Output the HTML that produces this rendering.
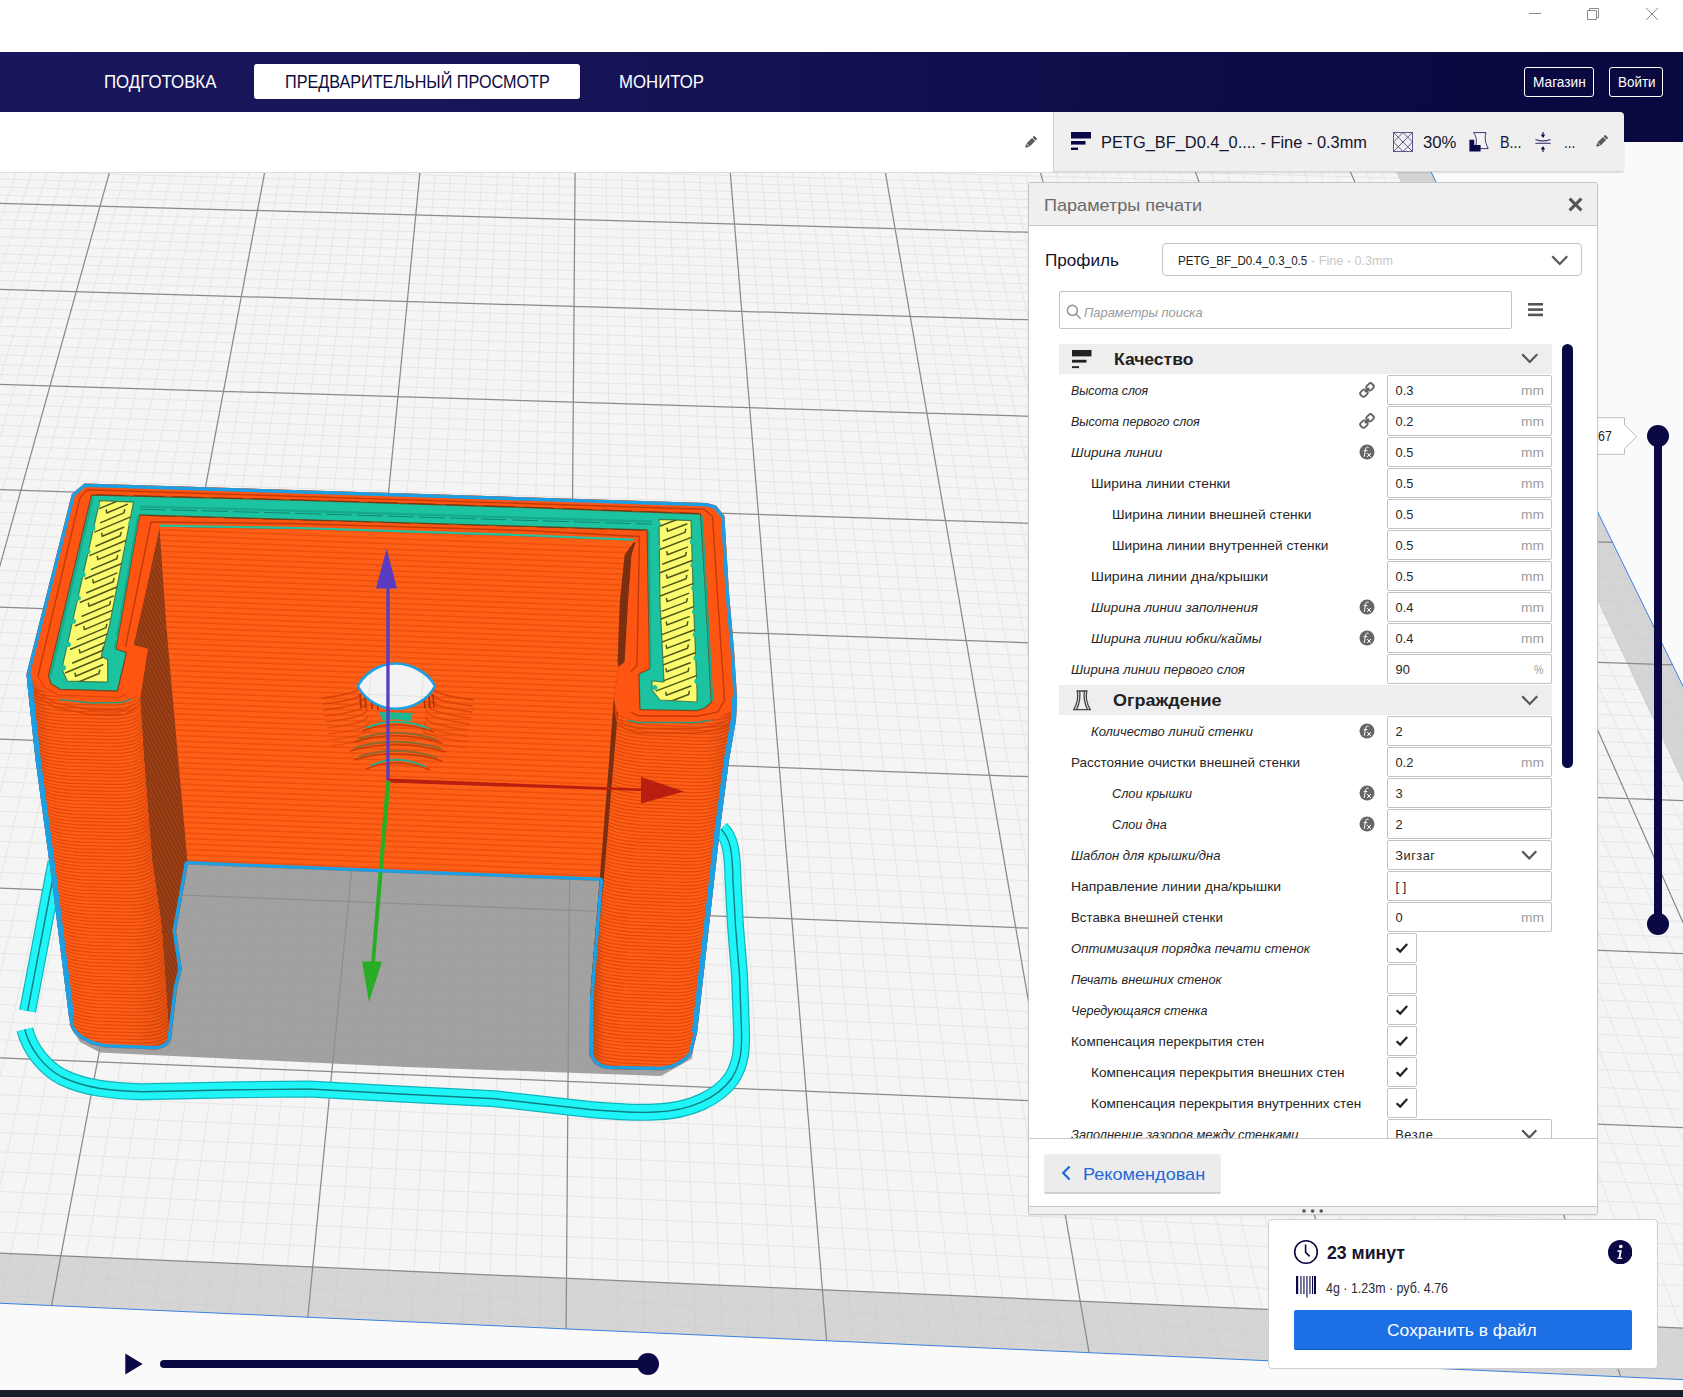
<!DOCTYPE html>
<html><head><meta charset="utf-8"><title>Cura</title>
<style>
html,body{margin:0;padding:0;background:#fafafa;}
body{width:1683px;height:1397px;position:relative;overflow:hidden;font-family:"Liberation Sans",sans-serif;}
.t{position:absolute;white-space:nowrap;line-height:1;transform-origin:0 0;}
div{box-sizing:border-box}
</style></head><body>
<svg style="position:absolute;left:0;top:0" width="1683" height="1397" viewBox="0 0 1683 1397"><rect width="1683" height="1397" fill="#fafafa"/><polygon points="-144.7,49.5 1390.6,89.3 2030.4,1395.4 -705.4,1271.2" fill="#f5f5f5"/>
<path d="M-130.4,49.9L-680.4,1272.4M-116.2,50.3L-655.5,1273.5M-101.9,50.6L-630.5,1274.6M-87.6,51.0L-605.5,1275.8M-73.4,51.4L-580.5,1276.9M-59.1,51.7L-555.4,1278.0M-44.8,52.1L-530.4,1279.2M-30.5,52.5L-505.3,1280.3M-16.2,52.9L-480.2,1281.5M12.5,53.6L-430.0,1283.7M26.8,54.0L-404.8,1284.9M41.1,54.3L-379.6,1286.0M55.5,54.7L-354.4,1287.2M69.8,55.1L-329.2,1288.3M84.1,55.4L-304.0,1289.5M98.5,55.8L-278.7,1290.6M112.9,56.2L-253.4,1291.7M127.2,56.6L-228.1,1292.9M156.0,57.3L-177.5,1295.2M170.4,57.7L-152.1,1296.3M184.8,58.1L-126.7,1297.5M199.2,58.4L-101.3,1298.6M213.6,58.8L-75.9,1299.8M228.0,59.2L-50.5,1301.0M242.4,59.5L-25.0,1302.1M256.9,59.9L0.4,1303.3M271.3,60.3L25.9,1304.4M300.2,61.0L77.0,1306.7M314.6,61.4L102.6,1307.9M329.1,61.8L128.1,1309.1M343.6,62.2L153.7,1310.2M358.0,62.5L179.4,1311.4M372.5,62.9L205.0,1312.5M387.0,63.3L230.7,1313.7M401.5,63.7L256.3,1314.9M416.0,64.0L282.0,1316.0M445.0,64.8L333.5,1318.4M459.5,65.2L359.3,1319.5M474.1,65.5L385.1,1320.7M488.6,65.9L410.9,1321.9M503.1,66.3L436.7,1323.1M517.7,66.7L462.5,1324.2M532.2,67.0L488.4,1325.4M546.8,67.4L514.3,1326.6M561.3,67.8L540.2,1327.8M590.5,68.6L592.1,1330.1M605.1,68.9L618.1,1331.3M619.7,69.3L644.1,1332.5M634.3,69.7L670.1,1333.6M648.9,70.1L696.1,1334.8M663.5,70.4L722.2,1336.0M678.1,70.8L748.2,1337.2M692.7,71.2L774.3,1338.4M707.4,71.6L800.4,1339.6M736.6,72.3L852.7,1341.9M751.3,72.7L878.9,1343.1M765.9,73.1L905.1,1344.3M780.6,73.5L931.4,1345.5M795.3,73.9L957.6,1346.7M810.0,74.2L983.9,1347.9M824.6,74.6L1010.1,1349.1M839.3,75.0L1036.5,1350.3M854.0,75.4L1062.8,1351.5M883.4,76.1L1115.5,1353.9M898.2,76.5L1141.9,1355.1M912.9,76.9L1168.3,1356.3M927.6,77.3L1194.7,1357.5M942.3,77.7L1221.2,1358.7M957.1,78.0L1247.7,1359.9M971.8,78.4L1274.2,1361.1M986.6,78.8L1300.7,1362.3M1001.4,79.2L1327.3,1363.5M1030.9,80.0L1380.4,1365.9M1045.7,80.3L1407.0,1367.1M1060.5,80.7L1433.6,1368.3M1075.3,81.1L1460.3,1369.5M1090.1,81.5L1487.0,1370.7M1104.9,81.9L1513.7,1371.9M1119.7,82.3L1540.4,1373.1M1134.5,82.6L1567.1,1374.3M1149.4,83.0L1593.9,1375.6M1179.0,83.8L1647.5,1378.0M1193.9,84.2L1674.3,1379.2M1208.7,84.6L1701.1,1380.4M1223.6,84.9L1728.0,1381.6M1238.5,85.3L1754.9,1382.9M1253.4,85.7L1781.8,1384.1M1268.2,86.1L1808.7,1385.3M1283.1,86.5L1835.7,1386.5M1298.0,86.9L1862.7,1387.8M1327.9,87.6L1916.7,1390.2M1342.8,88.0L1943.7,1391.4M1357.7,88.4L1970.8,1392.7M1372.6,88.8L1997.9,1393.9M1387.6,89.2L2025.0,1395.1M-147.8,56.3L1394.0,96.4M-151.0,63.2L1397.6,103.6M-154.1,70.1L1401.1,110.8M-157.3,77.0L1404.7,118.2M-160.6,84.1L1408.3,125.5M-163.8,91.2L1412.0,133.0M-167.1,98.3L1415.7,140.5M-170.4,105.5L1419.4,148.1M-173.7,112.8L1423.1,155.7M-180.5,127.6L1430.7,171.3M-183.9,135.0L1434.6,179.1M-187.4,142.6L1438.5,187.1M-190.9,150.2L1442.4,195.1M-194.4,157.9L1446.3,203.1M-198.0,165.6L1450.3,211.3M-201.6,173.4L1454.4,219.5M-205.2,181.3L1458.5,227.9M-208.8,189.3L1462.6,236.2M-216.2,205.4L1470.9,253.3M-220.0,213.6L1475.1,261.9M-223.8,221.9L1479.4,270.6M-227.6,230.2L1483.7,279.4M-231.5,238.6L1488.1,288.3M-235.4,247.1L1492.5,297.3M-239.3,255.7L1496.9,306.3M-243.3,264.4L1501.4,315.5M-247.3,273.1L1505.9,324.7M-255.5,290.9L1515.1,343.5M-259.6,299.9L1519.8,353.0M-263.8,309.0L1524.5,362.6M-268.0,318.2L1529.2,372.3M-272.2,327.4L1534.0,382.2M-276.5,336.8L1538.9,392.1M-280.9,346.3L1543.8,402.1M-285.3,355.8L1548.8,412.2M-289.7,365.5L1553.8,422.4M-298.7,385.1L1564.0,443.2M-303.3,395.1L1569.1,453.8M-307.9,405.1L1574.4,464.4M-312.6,415.3L1579.6,475.2M-317.3,425.5L1585.0,486.1M-322.0,435.9L1590.4,497.1M-326.8,446.4L1595.8,508.3M-331.7,457.0L1601.3,519.5M-336.6,467.7L1606.9,530.9M-346.6,489.5L1618.3,554.1M-351.7,500.5L1624.0,565.8M-356.8,511.7L1629.9,577.7M-362.0,523.0L1635.8,589.8M-367.3,534.5L1641.7,601.9M-372.6,546.0L1647.7,614.2M-377.9,557.7L1653.8,626.7M-383.3,569.5L1660.0,639.3M-388.8,581.5L1666.3,652.0M-400.0,605.8L1679.0,678.0M-405.7,618.2L1685.4,691.2M-411.4,630.7L1692.0,704.5M-417.2,643.3L1698.6,718.0M-423.1,656.1L1705.3,731.7M-429.0,669.1L1712.1,745.6M-435.0,682.2L1718.9,759.6M-441.1,695.4L1725.9,773.8M-447.3,708.9L1732.9,788.1M-459.8,736.2L1747.3,817.4M-466.2,750.1L1754.6,832.3M-472.7,764.2L1762.0,847.4M-479.2,778.4L1769.5,862.7M-485.8,792.9L1777.1,878.2M-492.5,807.5L1784.7,893.9M-499.3,822.3L1792.5,909.8M-506.2,837.3L1800.4,925.9M-513.2,852.4L1808.4,942.2M-527.4,883.4L1824.7,975.4M-534.6,899.1L1833.0,992.4M-541.9,915.1L1841.5,1009.6M-549.4,931.3L1850.0,1027.1M-556.9,947.7L1858.7,1044.8M-564.5,964.3L1867.4,1062.7M-572.3,981.2L1876.3,1080.8M-580.1,998.2L1885.4,1099.3M-588.0,1015.5L1894.5,1118.0M-604.2,1050.8L1913.2,1156.1M-612.5,1068.9L1922.8,1175.6M-620.9,1087.1L1932.5,1195.4M-629.4,1105.7L1942.3,1215.5M-638.0,1124.5L1952.3,1235.9M-646.8,1143.5L1962.4,1256.6M-655.7,1162.9L1972.7,1277.5M-664.7,1182.5L1983.1,1298.8M-673.8,1202.4L1993.7,1320.5M-692.5,1243.1L2015.4,1364.7M-702.0,1263.9L2026.5,1387.4" stroke="#e5e5e5" stroke-width="0.95" fill="none"/>
<polygon points="1356.9,88.4 1390.6,89.3 2030.4,1395.4 -705.4,1271.2 -683.1,1222.6 1944.6,1339.8" fill="#c1c1c1" fill-opacity="0.62"/>
<path d="M-144.7,49.5L-705.4,1271.2M-1.9,53.2L-455.1,1282.6M141.6,56.9L-202.8,1294.0M285.7,60.7L51.5,1305.6M430.5,64.4L307.8,1317.2M575.9,68.2L566.1,1328.9M722.0,72.0L826.6,1340.7M868.7,75.8L1089.1,1352.7M1016.1,79.6L1353.8,1364.7M1164.2,83.4L1620.7,1376.8M1312.9,87.3L1889.7,1389.0M-144.7,49.5L1390.6,89.3M-177.1,120.2L1426.9,163.5M-212.5,197.3L1466.7,244.7M-251.4,282.0L1510.5,334.1M-294.2,375.2L1558.8,432.8M-341.6,478.5L1612.6,542.4M-394.4,593.6L1672.6,664.9M-453.5,722.4L1740.1,802.7M-520.2,867.8L1816.5,958.7M-596.1,1033.1L1903.8,1136.9M-683.1,1222.6L2004.5,1342.4" stroke="#8a8a8a" stroke-width="1.25" fill="none"/>
<path d="M1390.6,89.3L2030.4,1395.4L-705.4,1271.2" stroke="#3b7fe2" stroke-width="1" fill="none"/><defs>
<pattern id="lay" width="40" height="5.4" patternUnits="userSpaceOnUse" patternTransform="rotate(2.2)"><rect width="40" height="5.4" fill="#ff6018"/><rect y="3.9" width="40" height="1.5" fill="#ec4e0c"/></pattern>
<pattern id="layp" width="40" height="5.2" patternUnits="userSpaceOnUse" patternTransform="rotate(2.5)"><rect width="40" height="5.2" fill="#ff5d16"/><rect y="3.4" width="40" height="1.8" fill="#dd440a"/></pattern>
<pattern id="layd" width="40" height="3.4" patternUnits="userSpaceOnUse" patternTransform="rotate(62)"><rect width="40" height="3.4" fill="#8d3713"/><rect y="2.2" width="40" height="1.2" fill="#a34417"/></pattern>
<linearGradient id="gl" x1="0" x2="1" y1="0" y2="0"><stop offset="0" stop-color="#000" stop-opacity=".14"/><stop offset=".16" stop-color="#000" stop-opacity="0"/><stop offset=".72" stop-color="#000" stop-opacity="0"/><stop offset="1" stop-color="#000" stop-opacity=".10"/></linearGradient>
<linearGradient id="gr" x1="0" x2="1" y1="0" y2="0"><stop offset="0" stop-color="#000" stop-opacity=".22"/><stop offset=".10" stop-color="#000" stop-opacity="0"/><stop offset=".8" stop-color="#000" stop-opacity="0"/><stop offset="1" stop-color="#000" stop-opacity=".12"/></linearGradient>
<clipPath id="silclip"><polygon points="84.3,483.4 400.0,493.3 706.6,503.0 716.0,505.5 724.4,516.0 729.0,593.0 734.0,650.0 737.0,697.7 736.0,720.0 729.0,760.0 719.7,831.0 709.0,926.0 697.0,1033.0 692.0,1053.7 687.0,1059.8 680.0,1064.5 672.0,1068.3 661.4,1070.3 610.0,1069.3 602.0,1068.0 594.5,1063.5 590.0,1056.0 590.0,997.7 599.6,881.0 400.0,873.3 187.8,864.6 176.0,931.0 181.8,969.0 177.0,988.0 171.0,1039.0 169.2,1043.5 165.0,1047.0 157.0,1049.5 104.6,1047.6 91.0,1044.0 81.0,1039.0 74.5,1033.5 71.0,1027.5 69.0,1016.7 51.0,874.0 35.6,760.0 28.0,690.0 26.5,674.0 71.8,494.2"/></clipPath>
<clipPath id="holeclip"><path d="M357.7 686 C368 668 385 663.5 396 663.5 C410 663.5 428 672 435 686 C428 700 412 708.8 396 708.8 C382 708.8 366 702 357.7 686Z"/></clipPath>
<clipPath id="plclip"><polygon points="60.0,660.0 26.5,674.0 28.0,690.0 35.6,760.0 51.0,874.0 69.0,1016.7 71.0,1027.5 74.5,1033.5 81.0,1039.0 91.0,1044.0 104.6,1047.6 157.0,1049.5 165.0,1047.0 169.2,1043.5 171.0,1039.0 168.7,1028.6 161.6,926.0 152.0,860.0 144.0,760.0 140.0,698.0 145.0,648.0 140.0,660.0"/></clipPath>
<clipPath id="prclip"><polygon points="640.0,680.0 618.7,666.8 613.9,697.7 609.2,760.0 599.6,881.0 590.0,997.7 589.5,1056.0 594.5,1063.5 602.0,1068.0 610.0,1069.3 661.4,1070.3 672.0,1068.3 680.0,1064.5 687.0,1059.8 692.0,1053.7 697.0,1033.0 709.0,926.0 719.7,831.0 729.0,760.0 736.0,720.0 737.0,697.7 720.0,680.0"/></clipPath>
<clipPath id="ycl"><polygon points="99.8,500.6 133.5,502.2 109.4,625.7 101.3,656.2 107.6,659.8 107.6,682.1 67.3,681.2 61.9,668.7"/></clipPath>
<clipPath id="ycr"><polygon points="659.0,519.4 691.0,520.6 693.5,602.0 697.0,690.0 697.0,702.0 660.0,700.0 652.0,690.0 652.0,681.0 664.0,682.0 660.0,602.0"/></clipPath>
<clipPath id="backclip"><polygon points="159.5,527.3 400.0,533.8 634.0,543.0 626.0,555.0 621.0,602.6 619.0,662.0 614.5,697.7 609.6,760.0 599.6,881.0 400.0,873.3 187.8,864.6 178.3,760.0 166.4,626.4"/></clipPath>
</defs>
<polygon points="187.8,864.6 400.0,873.3 599.6,881.0 640.0,950.0 693.0,1050.0 692.0,1058.4 661.0,1076.0 400.0,1066.8 100.0,1052.5 80.0,1042.0 69.0,1024.0 120.0,950.0" fill="#8f8f8f" fill-opacity="0.82"/>
<path d="M56 862 L27.6 1011" fill="none" stroke="#12b4bc" stroke-width="17" stroke-linecap="butt" stroke-linejoin="round"/>
<path d="M56 862 L27.6 1011" fill="none" stroke="#1ff4f6" stroke-width="14.6" stroke-linecap="butt" stroke-linejoin="round"/>
<path d="M56 862 L27.6 1011" fill="none" stroke="#0f7f86" stroke-width="1.4" stroke-linecap="butt"/>
<path d="M24.8 1029.5 C30 1050 45 1068 62 1077 C85 1088 110 1091 142.6 1091.7 L237.7 1089.8 L309 1089 L400 1094 L495 1098.8 L590 1109.5 C620 1112 640 1113 655 1112 C690 1111 718 1098 732 1078 C741 1063 742 1050 741.5 1030 L739.5 975 L735.5 926 L733 880 C732.5 850 730 838 721 829" fill="none" stroke="#12b4bc" stroke-width="17" stroke-linecap="butt" stroke-linejoin="round"/>
<path d="M24.8 1029.5 C30 1050 45 1068 62 1077 C85 1088 110 1091 142.6 1091.7 L237.7 1089.8 L309 1089 L400 1094 L495 1098.8 L590 1109.5 C620 1112 640 1113 655 1112 C690 1111 718 1098 732 1078 C741 1063 742 1050 741.5 1030 L739.5 975 L735.5 926 L733 880 C732.5 850 730 838 721 829" fill="none" stroke="#1ff4f6" stroke-width="14.6" stroke-linecap="butt" stroke-linejoin="round"/>
<path d="M24.8 1029.5 C30 1050 45 1068 62 1077 C85 1088 110 1091 142.6 1091.7 L237.7 1089.8 L309 1089 L400 1094 L495 1098.8 L590 1109.5 C620 1112 640 1113 655 1112 C690 1111 718 1098 732 1078 C741 1063 742 1050 741.5 1030 L739.5 975 L735.5 926 L733 880 C732.5 850 730 838 721 829" fill="none" stroke="#0f7f86" stroke-width="1.4" stroke-linecap="butt"/>
<polygon points="84.3,483.4 400.0,493.3 706.6,503.0 716.0,505.5 724.4,516.0 729.0,593.0 734.0,650.0 737.0,697.7 736.0,720.0 729.0,760.0 719.7,831.0 709.0,926.0 697.0,1033.0 692.0,1053.7 687.0,1059.8 680.0,1064.5 672.0,1068.3 661.4,1070.3 610.0,1069.3 602.0,1068.0 594.5,1063.5 590.0,1056.0 590.0,997.7 599.6,881.0 400.0,873.3 187.8,864.6 176.0,931.0 181.8,969.0 177.0,988.0 171.0,1039.0 169.2,1043.5 165.0,1047.0 157.0,1049.5 104.6,1047.6 91.0,1044.0 81.0,1039.0 74.5,1033.5 71.0,1027.5 69.0,1016.7 51.0,874.0 35.6,760.0 28.0,690.0 26.5,674.0 71.8,494.2" fill="#ff5f16" />
<polygon points="159.5,527.3 400.0,533.8 634.0,543.0 626.0,555.0 621.0,602.6 619.0,662.0 614.5,697.7 609.6,760.0 599.6,881.0 400.0,873.3 187.8,864.6 178.3,760.0 166.4,626.4" fill="url(#lay)" />
<g clip-path="url(#backclip)" fill="none">
<path d="M322.0 698.0Q367.4 693.0 362.0 682.0" stroke="#d23f08" stroke-width="1.6" stroke-opacity="0.85"/>
<path d="M474.0 700.0Q424.6 694.0 432.0 683.0" stroke="#d23f08" stroke-width="1.6" stroke-opacity="0.85"/>
<path d="M323.0 704.0Q367.9 699.0 363.2 688.6" stroke="#d23f08" stroke-width="1.6" stroke-opacity="0.80"/>
<path d="M473.0 706.0Q424.1 700.0 430.8 689.6" stroke="#d23f08" stroke-width="1.6" stroke-opacity="0.80"/>
<path d="M324.0 710.0Q368.5 705.0 364.4 695.2" stroke="#d23f08" stroke-width="1.6" stroke-opacity="0.75"/>
<path d="M472.0 712.0Q423.5 706.0 429.6 696.2" stroke="#d23f08" stroke-width="1.6" stroke-opacity="0.75"/>
<path d="M325.0 716.0Q369.1 711.0 365.6 701.8" stroke="#d23f08" stroke-width="1.6" stroke-opacity="0.70"/>
<path d="M471.0 718.0Q422.9 712.0 428.4 702.8" stroke="#d23f08" stroke-width="1.6" stroke-opacity="0.70"/>
<path d="M326.0 722.0Q369.6 717.0 366.8 708.4" stroke="#d23f08" stroke-width="1.6" stroke-opacity="0.65"/>
<path d="M470.0 724.0Q422.4 718.0 427.2 709.4" stroke="#d23f08" stroke-width="1.6" stroke-opacity="0.65"/>
<path d="M327.0 728.0Q370.1 723.0 368.0 715.0" stroke="#d23f08" stroke-width="1.6" stroke-opacity="0.60"/>
<path d="M469.0 730.0Q421.9 724.0 426.0 716.0" stroke="#d23f08" stroke-width="1.6" stroke-opacity="0.60"/>
<path d="M328.0 734.0Q370.7 729.0 369.2 721.6" stroke="#d23f08" stroke-width="1.6" stroke-opacity="0.55"/>
<path d="M468.0 736.0Q421.3 730.0 424.8 722.6" stroke="#d23f08" stroke-width="1.6" stroke-opacity="0.55"/>
<path d="M329.0 740.0Q371.2 735.0 370.4 728.2" stroke="#d23f08" stroke-width="1.6" stroke-opacity="0.50"/>
<path d="M467.0 742.0Q420.8 736.0 423.6 729.2" stroke="#d23f08" stroke-width="1.6" stroke-opacity="0.50"/>
<path d="M330.0 746.0Q371.8 741.0 371.6 734.8" stroke="#d23f08" stroke-width="1.6" stroke-opacity="0.45"/>
<path d="M466.0 748.0Q420.2 742.0 422.4 735.8" stroke="#d23f08" stroke-width="1.6" stroke-opacity="0.45"/>
<path d="M366 728Q396 715 430 729" stroke="#1fb694" stroke-width="1.8"/>
<path d="M362 731Q396 718 434 732" stroke="#c63b07" stroke-width="1.5"/>
<path d="M358 739Q396 726 438 740" stroke="#8a6a30" stroke-width="1.8"/>
<path d="M354 742Q396 729 442 743" stroke="#c63b07" stroke-width="1.5"/>
<path d="M354 748Q396 735 442 749" stroke="#8a6a30" stroke-width="1.8"/>
<path d="M350 751Q396 738 446 752" stroke="#c63b07" stroke-width="1.5"/>
<path d="M358 757Q396 744 438 758" stroke="#8a6a30" stroke-width="1.8"/>
<path d="M354 760Q396 747 442 761" stroke="#c63b07" stroke-width="1.5"/>
<path d="M370 766Q396 753 426 767" stroke="#2aa888" stroke-width="1.8"/>
<path d="M366 769Q396 756 430 770" stroke="#c63b07" stroke-width="1.5"/>
<path d="M379 712L413 713L410 722Q396 717 383 721Z" fill="#1fb694"/>
<path d="M360 694.2L361 707.7" stroke="#a83205" stroke-width="1.6"/>
<path d="M365 694.5L366 708.3" stroke="#a83205" stroke-width="1.6"/>
<path d="M371 694.8L372 709.0" stroke="#a83205" stroke-width="1.6"/>
<path d="M377 695.0L378 709.7" stroke="#a83205" stroke-width="1.6"/>
<path d="M424 694.6L425 708.6" stroke="#a83205" stroke-width="1.6"/>
<path d="M429 694.4L430 708.0" stroke="#a83205" stroke-width="1.6"/>
<path d="M433 694.1L434 707.6" stroke="#a83205" stroke-width="1.6"/>
</g>
<polygon points="159.5,527.3 166.4,626.4 178.3,760.0 187.8,864.6 176.0,931.0 181.8,969.0 177.0,988.0 171.0,1039.0 168.7,1028.6 161.6,926.0 152.0,860.0 144.0,760.0 140.0,698.0 147.8,649.0 133.5,645.0 146.0,590.0" fill="url(#layd)" />
<polygon points="60.0,660.0 26.5,674.0 28.0,690.0 35.6,760.0 51.0,874.0 69.0,1016.7 71.0,1027.5 74.5,1033.5 81.0,1039.0 91.0,1044.0 104.6,1047.6 157.0,1049.5 165.0,1047.0 169.2,1043.5 171.0,1039.0 168.7,1028.6 161.6,926.0 152.0,860.0 144.0,760.0 140.0,698.0 145.0,648.0 140.0,660.0" fill="#ff5e16" />
<path d="M27.0 682.0C30.5 689.5 41.5 692.2 61.8 693.6L102.4 694.8C125.0 695.6 136.8 692.9 141.8 684.4M27.4 685.5C30.9 693.0 41.8 695.7 62.0 697.1L102.3 698.3C124.8 699.0 136.5 696.3 141.5 687.8M27.7 688.9C31.2 696.4 42.1 699.1 62.2 700.5L102.2 701.7C124.5 702.4 136.1 699.7 141.1 691.2M28.1 692.4C31.6 699.9 42.4 702.6 62.4 703.9L102.4 705.1C124.6 705.9 136.2 703.2 141.2 694.7M28.5 695.8C32.0 703.3 42.8 706.0 62.8 707.4L102.7 708.6C124.9 709.3 136.4 706.6 141.4 698.1M28.9 699.3C32.4 706.8 43.2 709.5 63.1 710.8L103.0 712.0C125.1 712.8 136.6 710.1 141.6 701.6M29.2 702.7C32.7 710.2 43.5 712.9 63.4 714.3L103.2 715.5C125.3 716.2 136.8 713.5 141.8 705.0M29.6 706.2C33.1 713.7 43.9 716.4 63.7 717.7L103.5 718.9C125.6 719.7 137.0 717.0 142.0 708.5M30.0 709.6C33.5 717.1 44.2 719.8 64.1 721.2L103.8 722.4C125.8 723.1 137.3 720.4 142.3 711.9M30.4 713.1C33.9 720.6 44.6 723.3 64.4 724.6L104.0 725.8C126.1 726.6 137.5 723.9 142.5 715.4M30.7 716.5C34.2 724.0 44.9 726.7 64.7 728.1L104.3 729.3C126.3 730.0 137.7 727.3 142.7 718.8M31.1 720.0C34.6 727.5 45.3 730.2 65.1 731.5L104.6 732.7C126.6 733.4 137.9 730.7 142.9 722.2M31.5 723.4C35.0 730.9 45.7 733.6 65.4 735.0L104.9 736.2C126.8 736.9 138.2 734.2 143.2 725.7M31.9 726.9C35.4 734.4 46.0 737.1 65.7 738.4L105.1 739.6C127.0 740.3 138.4 737.6 143.4 729.1M32.2 730.3C35.7 737.8 46.4 740.5 66.1 741.9L105.4 743.1C127.3 743.8 138.6 741.1 143.6 732.6M32.6 733.8C36.1 741.3 46.7 744.0 66.4 745.3L105.7 746.5C127.5 747.2 138.8 744.5 143.8 736.0M33.0 737.2C36.5 744.7 47.1 747.4 66.7 748.8L106.0 750.0C127.8 750.7 139.0 748.0 144.0 739.5M33.4 740.7C36.9 748.2 47.4 750.9 67.0 752.2L106.2 753.4C128.0 754.1 139.3 751.4 144.3 742.9M33.7 744.1C37.2 751.6 47.8 754.3 67.4 755.7L106.5 756.9C128.3 757.6 139.5 754.9 144.5 746.4M34.1 747.6C37.6 755.1 48.1 757.8 67.7 759.1L106.8 760.3C128.5 761.0 139.7 758.3 144.7 749.8M34.5 751.0C38.0 758.5 48.5 761.2 68.0 762.6L107.1 763.7C128.8 764.5 139.9 761.8 144.9 753.3M34.9 754.5C38.4 762.0 48.9 764.7 68.4 766.0L107.4 767.2C129.0 767.9 140.2 765.2 145.2 756.7M35.4 757.9C38.9 765.4 49.4 768.1 68.8 769.5L107.7 770.6C129.3 771.3 140.5 768.6 145.5 760.1M35.9 761.4C39.4 768.9 49.8 771.6 69.2 772.9L108.1 774.1C129.6 774.8 140.7 772.1 145.7 763.6M36.3 764.8C39.8 772.3 50.3 775.0 69.6 776.4L108.4 777.5C129.9 778.2 141.0 775.5 146.0 767.0M36.8 768.3C40.3 775.8 50.7 778.5 70.0 779.8L108.7 781.0C130.2 781.7 141.3 779.0 146.3 770.5M37.3 771.7C40.8 779.2 51.1 781.9 70.5 783.3L109.1 784.4C130.6 785.1 141.6 782.4 146.6 773.9M37.7 775.2C41.2 782.7 51.6 785.4 70.9 786.7L109.4 787.9C130.9 788.6 141.9 785.9 146.9 777.4M38.2 778.6C41.7 786.1 52.0 788.8 71.3 790.2L109.8 791.3C131.2 792.0 142.1 789.3 147.1 780.8M38.7 782.1C42.2 789.6 52.5 792.3 71.7 793.6L110.1 794.8C131.5 795.5 142.4 792.8 147.4 784.3M39.1 785.5C42.6 793.0 52.9 795.7 72.1 797.1L110.5 798.2C131.8 798.9 142.7 796.2 147.7 787.7M39.6 789.0C43.1 796.5 53.4 799.2 72.5 800.5L110.8 801.7C132.1 802.3 143.0 799.6 148.0 791.1M40.1 792.4C43.6 799.9 53.8 802.6 72.9 804.0L111.1 805.1C132.4 805.8 143.2 803.1 148.2 794.6M40.5 795.9C44.0 803.4 54.2 806.1 73.3 807.4L111.5 808.5C132.7 809.2 143.5 806.5 148.5 798.0M41.0 799.3C44.5 806.8 54.7 809.5 73.7 810.9L111.8 812.0C133.0 812.7 143.8 810.0 148.8 801.5M41.5 802.8C45.0 810.3 55.1 813.0 74.1 814.3L112.2 815.4C133.3 816.1 144.1 813.4 149.1 804.9M41.9 806.2C45.4 813.7 55.6 816.4 74.5 817.7L112.5 818.9C133.6 819.6 144.3 816.9 149.3 808.4M42.4 809.7C45.9 817.2 56.0 819.9 75.0 821.2L112.8 822.3C133.9 823.0 144.6 820.3 149.6 811.8M42.9 813.1C46.4 820.6 56.5 823.3 75.4 824.6L113.2 825.8C134.2 826.5 144.9 823.8 149.9 815.3M43.3 816.6C46.8 824.1 56.9 826.8 75.8 828.1L113.5 829.2C134.5 829.9 145.2 827.2 150.2 818.7M43.8 820.0C47.3 827.5 57.3 830.2 76.2 831.5L113.9 832.7C134.8 833.3 145.4 830.6 150.4 822.1M44.3 823.5C47.8 831.0 57.8 833.7 76.6 835.0L114.2 836.1C135.1 836.8 145.7 834.1 150.7 825.6M44.7 826.9C48.2 834.4 58.2 837.1 77.0 838.4L114.5 839.6C135.4 840.2 146.0 837.5 151.0 829.0M45.2 830.4C48.7 837.9 58.7 840.6 77.4 841.9L114.9 843.0C135.7 843.7 146.3 841.0 151.3 832.5M45.7 833.8C49.2 841.3 59.1 844.0 77.8 845.3L115.2 846.5C136.0 847.1 146.5 844.4 151.5 835.9M46.1 837.3C49.6 844.8 59.6 847.5 78.2 848.8L115.6 849.9C136.3 850.6 146.8 847.9 151.8 839.4M46.6 840.7C50.1 848.2 60.0 850.9 78.6 852.2L115.9 853.3C136.6 854.0 147.1 851.3 152.1 842.8M47.0 844.2C50.5 851.7 60.4 854.4 79.0 855.7L116.2 856.8C136.9 857.4 147.4 854.7 152.4 846.2M47.5 847.6C51.0 855.1 60.9 857.8 79.5 859.1L116.6 860.2C137.2 860.9 147.6 858.2 152.6 849.7M48.0 851.1C51.5 858.6 61.3 861.3 79.9 862.6L116.9 863.7C137.5 864.3 147.9 861.6 152.9 853.1M48.4 854.5C51.9 862.0 61.8 864.7 80.3 866.0L117.4 867.1C138.0 867.8 148.4 865.1 153.4 856.6M48.9 858.0C52.4 865.5 62.3 868.2 80.8 869.5L117.9 870.6C138.5 871.2 148.9 868.5 153.9 860.0M49.4 861.4C52.9 868.9 62.7 871.6 81.3 872.9L118.4 874.0C138.9 874.7 149.4 872.0 154.4 863.5M49.8 864.9C53.3 872.4 63.2 875.1 81.8 876.4L118.8 877.5C139.4 878.1 149.9 875.4 154.9 866.9M50.3 868.3C53.8 875.8 63.7 878.5 82.2 879.8L119.3 880.9C139.9 881.6 150.4 878.9 155.4 870.4M50.7 871.8C54.2 879.3 64.1 882.0 82.7 883.3L119.8 884.4C140.4 885.0 150.9 882.3 155.9 873.8M51.2 875.2C54.7 882.7 64.5 885.4 83.1 886.7L120.3 887.8C140.9 888.5 151.4 885.8 156.4 877.3M51.6 878.7C55.1 886.2 65.0 888.9 83.6 890.2L120.8 891.3C141.4 891.9 151.9 889.2 156.9 880.7M52.0 882.1C55.5 889.6 65.4 892.3 84.0 893.6L121.2 894.7C141.9 895.4 152.4 892.7 157.4 884.2M52.5 885.6C56.0 893.1 65.9 895.8 84.5 897.1L121.7 898.2C142.4 898.9 152.9 896.2 157.9 887.7M52.9 889.0C56.4 896.5 66.3 899.2 84.9 900.5L122.2 901.6C142.9 902.3 153.4 899.6 158.4 891.1M53.3 892.5C56.8 900.0 66.8 902.7 85.4 904.0L122.7 905.1C143.4 905.8 153.9 903.1 158.9 894.6M53.8 895.9C57.3 903.4 67.2 906.1 85.9 907.4L123.2 908.6C143.9 909.2 154.4 906.5 159.4 898.0M54.2 899.4C57.7 906.9 67.6 909.6 86.3 910.9L123.6 912.0C144.4 912.7 154.9 910.0 159.9 901.5M54.6 902.8C58.1 910.3 68.1 913.0 86.8 914.3L124.1 915.5C144.9 916.1 155.4 913.4 160.4 904.9M55.1 906.3C58.6 913.8 68.5 916.5 87.2 917.8L124.6 918.9C145.4 919.6 155.9 916.9 160.9 908.4M55.5 909.7C59.0 917.2 69.0 919.9 87.7 921.2L125.1 922.4C145.8 923.0 156.4 920.3 161.4 911.8M55.9 913.2C59.4 920.7 69.4 923.4 88.1 924.7L125.6 925.8C146.3 926.5 156.9 923.8 161.9 915.3M56.4 916.6C59.9 924.1 69.9 926.8 88.6 928.1L126.0 929.3C146.8 929.9 157.4 927.2 162.4 918.7M56.8 920.1C60.3 927.6 70.3 930.3 89.0 931.6L126.4 932.7C147.2 933.4 157.7 930.7 162.7 922.2M57.3 923.5C60.8 931.0 70.7 933.7 89.4 935.0L126.7 936.2C147.5 936.8 158.0 934.1 163.0 925.6M57.7 927.0C61.2 934.5 71.1 937.2 89.7 938.5L127.0 939.6C147.7 940.3 158.2 937.6 163.2 929.1M58.1 930.4C61.6 937.9 71.5 940.6 90.1 941.9L127.3 943.0C148.0 943.7 158.5 941.0 163.5 932.5M58.6 933.9C62.1 941.4 71.9 944.1 90.5 945.4L127.6 946.5C148.3 947.1 158.7 944.4 163.7 935.9M59.0 937.3C62.5 944.8 72.3 947.5 90.9 948.8L127.9 949.9C148.5 950.6 158.9 947.9 163.9 939.4M59.4 940.8C62.9 948.3 72.8 951.0 91.3 952.3L128.2 953.4C148.8 954.0 159.2 951.3 164.2 942.8M59.9 944.2C63.4 951.7 73.2 954.4 91.6 955.7L128.5 956.8C149.1 957.5 159.4 954.8 164.4 946.3M60.3 947.7C63.8 955.2 73.6 957.9 92.0 959.2L128.9 960.3C149.3 960.9 159.7 958.2 164.7 949.7M60.7 951.1C64.2 958.6 74.0 961.3 92.4 962.6L129.2 963.7C149.6 964.4 159.9 961.7 164.9 953.2M61.2 954.6C64.7 962.1 74.4 964.8 92.8 966.1L129.5 967.2C149.9 967.8 160.1 965.1 165.1 956.6M61.6 958.0C65.1 965.5 74.8 968.2 93.1 969.5L129.8 970.6C150.1 971.3 160.4 968.6 165.4 960.1M62.0 961.5C65.5 969.0 75.2 971.7 93.5 973.0L130.1 974.1C150.4 974.7 160.6 972.0 165.6 963.5M62.5 964.9C66.0 972.4 75.6 975.1 93.9 976.4L130.4 977.5C150.7 978.1 160.8 975.4 165.8 966.9M62.9 968.4C66.4 975.9 76.1 978.6 94.3 979.9L130.7 981.0C150.9 981.6 161.1 978.9 166.1 970.4M63.3 971.8C66.8 979.3 76.5 982.0 94.6 983.3L131.0 984.4C151.2 985.0 161.3 982.3 166.3 973.8M63.8 975.3C67.3 982.8 76.9 985.5 95.0 986.8L131.3 987.8C151.5 988.5 161.6 985.8 166.6 977.3M64.2 978.7C67.7 986.2 77.3 988.9 95.4 990.2L131.6 991.3C151.7 991.9 161.8 989.2 166.8 980.7M64.7 982.2C68.2 989.7 77.7 992.4 95.8 993.7L131.9 994.7C152.0 995.4 162.0 992.7 167.0 984.2M65.1 985.6C68.6 993.1 78.1 995.8 96.1 997.1L132.2 998.2C152.3 998.8 162.3 996.1 167.3 987.6M65.5 989.1C69.0 996.6 78.5 999.3 96.5 1000.5L132.5 1001.6C152.5 1002.2 162.5 999.5 167.5 991.0M66.0 992.5C69.5 1000.0 78.9 1002.7 96.9 1004.0L132.8 1005.1C152.8 1005.7 162.8 1003.0 167.8 994.5M66.4 996.0C69.9 1003.5 79.3 1006.2 97.3 1007.4L133.1 1008.5C153.0 1009.1 163.0 1006.4 168.0 997.9M66.8 999.4C70.3 1006.9 79.8 1009.6 97.6 1010.9L133.4 1012.0C153.3 1012.6 163.2 1009.9 168.2 1001.4M67.3 1002.9C70.8 1010.4 80.2 1013.1 98.0 1014.3L133.7 1015.4C153.6 1016.0 163.5 1013.3 168.5 1004.8M67.7 1006.3C71.2 1013.8 80.6 1016.5 98.4 1017.8L134.0 1018.9C153.8 1019.5 163.7 1016.8 168.7 1008.3M68.1 1009.8C71.6 1017.3 81.0 1020.0 98.8 1021.2L134.3 1022.3C154.1 1022.9 163.9 1020.2 168.9 1011.7M68.4 1013.2C71.9 1020.7 81.3 1023.4 99.0 1024.7L134.6 1025.8C154.4 1026.4 164.2 1023.7 169.2 1015.2M68.7 1016.7C72.2 1024.2 81.6 1026.9 99.3 1028.1L134.9 1029.2C154.6 1029.8 164.4 1027.1 169.4 1018.6M69.0 1020.1C72.5 1027.6 81.9 1030.3 99.6 1031.6L135.1 1032.7C154.9 1033.3 164.7 1030.6 169.7 1022.1M69.3 1023.6C72.8 1031.1 82.2 1033.8 99.9 1035.0L135.5 1036.1C155.2 1036.7 165.0 1034.0 170.0 1025.5M69.6 1027.0C73.1 1034.5 82.5 1037.2 100.3 1038.5L135.8 1039.6C155.6 1040.2 165.4 1037.5 170.4 1029.0M70.0 1030.5C73.5 1038.0 82.8 1040.7 100.6 1041.9L136.2 1043.0C155.9 1043.6 165.8 1040.9 170.8 1032.4M70.3 1033.9C73.8 1041.4 83.1 1044.1 100.9 1045.4L136.5 1046.5C156.3 1047.1 166.1 1044.4 171.1 1035.9M70.6 1037.4C74.1 1044.9 83.5 1047.6 101.3 1048.8L136.9 1049.9C156.7 1050.5 166.5 1047.8 171.5 1039.3M70.9 1040.8C74.4 1048.3 83.8 1051.0 101.6 1052.3L137.2 1053.4C157.0 1054.0 166.9 1051.3 171.9 1042.8M71.0 1044.3C74.5 1051.8 83.9 1054.5 101.7 1055.7L137.3 1056.8C157.1 1057.4 167.0 1054.7 172.0 1046.2M71.0 1047.7C74.5 1055.2 83.9 1057.9 101.7 1059.2L137.3 1060.3C157.1 1060.9 167.0 1058.2 172.0 1049.7" fill="none" stroke="#e2480b" stroke-width="1.25" clip-path="url(#plclip)"/>
<polygon points="60.0,660.0 26.5,674.0 28.0,690.0 35.6,760.0 51.0,874.0 69.0,1016.7 71.0,1027.5 74.5,1033.5 81.0,1039.0 91.0,1044.0 104.6,1047.6 157.0,1049.5 165.0,1047.0 169.2,1043.5 171.0,1039.0 168.7,1028.6 161.6,926.0 152.0,860.0 144.0,760.0 140.0,698.0 145.0,648.0 140.0,660.0" fill="url(#gl)" />
<polygon points="640.0,680.0 618.7,666.8 613.9,697.7 609.2,760.0 599.6,881.0 590.0,997.7 589.5,1056.0 594.5,1063.5 602.0,1068.0 610.0,1069.3 661.4,1070.3 672.0,1068.3 680.0,1064.5 687.0,1059.8 692.0,1053.7 697.0,1033.0 709.0,926.0 719.7,831.0 729.0,760.0 736.0,720.0 737.0,697.7 720.0,680.0" fill="#ff5e16" />
<path d="M612.7 692.0C616.2 699.5 628.5 702.2 650.6 704.3L694.9 706.3C719.5 707.7 732.7 705.0 737.7 696.5M612.5 695.5C616.0 703.0 628.2 705.7 650.3 707.7L694.5 709.7C719.1 711.2 732.3 708.5 737.3 700.0M612.2 698.9C615.7 706.4 627.9 709.1 650.0 711.2L694.1 713.1C718.7 714.6 731.8 711.9 736.8 703.4M611.9 702.4C615.4 709.9 627.6 712.6 649.7 714.6L693.7 716.6C718.2 718.1 731.4 715.4 736.4 706.9M611.7 705.8C615.2 713.3 627.4 716.0 649.4 718.1L693.4 720.0C717.8 721.5 730.9 718.8 735.9 710.3M611.4 709.3C614.9 716.8 627.1 719.5 649.0 721.5L693.0 723.5C717.4 724.9 730.5 722.2 735.5 713.7M611.2 712.7C614.7 720.2 626.8 722.9 648.7 724.9L692.6 726.9C717.0 728.4 730.0 725.7 735.0 717.2M610.9 716.2C614.4 723.7 626.5 726.4 648.4 728.4L692.2 730.4C716.6 731.8 729.6 729.1 734.6 720.6M610.6 719.6C614.1 727.1 626.2 729.8 648.1 731.8L691.8 733.8C716.1 735.3 729.2 732.6 734.2 724.1M610.4 723.1C613.9 730.6 625.9 733.3 647.8 735.3L691.5 737.3C715.7 738.7 728.7 736.0 733.7 727.5M610.1 726.5C613.6 734.0 625.7 736.7 647.5 738.7L691.1 740.7C715.3 742.2 728.3 739.5 733.3 731.0M609.9 730.0C613.4 737.5 625.4 740.2 647.2 742.2L690.7 744.1C714.9 745.6 727.8 742.9 732.8 734.4M609.6 733.4C613.1 740.9 625.1 743.6 646.8 745.6L690.3 747.6C714.5 749.0 727.4 746.3 732.4 737.8M609.3 736.9C612.8 744.4 624.8 747.1 646.5 749.1L689.9 751.0C714.1 752.5 726.9 749.8 731.9 741.3M609.1 740.3C612.6 747.8 624.5 750.5 646.2 752.5L689.6 754.5C713.6 755.9 726.5 753.2 731.5 744.7M608.8 743.8C612.3 751.3 624.3 754.0 645.9 756.0L689.2 757.9C713.2 759.4 726.1 756.7 731.1 748.2M608.6 747.2C612.1 754.7 624.0 757.4 645.6 759.4L688.8 761.4C712.8 762.8 725.6 760.1 730.6 751.6M608.3 750.7C611.8 758.2 623.7 760.9 645.3 762.9L688.4 764.8C712.4 766.2 725.2 763.5 730.2 755.0M608.0 754.1C611.5 761.6 623.4 764.3 644.9 766.3L688.0 768.3C712.0 769.7 724.7 767.0 729.7 758.5M607.8 757.6C611.3 765.1 623.1 767.8 644.6 769.8L687.6 771.7C711.5 773.1 724.3 770.4 729.3 761.9M607.5 761.0C611.0 768.5 622.8 771.2 644.3 773.2L687.2 775.1C711.1 776.6 723.8 773.9 728.8 765.4M607.2 764.5C610.7 772.0 622.5 774.7 644.0 776.7L686.9 778.6C710.7 780.0 723.4 777.3 728.4 768.8M606.9 767.9C610.4 775.4 622.2 778.1 643.6 780.1L686.5 782.0C710.3 783.5 722.9 780.8 727.9 772.3M606.7 771.4C610.2 778.9 621.9 781.6 643.3 783.6L686.1 785.5C709.8 786.9 722.5 784.2 727.5 775.7M606.4 774.8C609.9 782.3 621.6 785.0 643.0 787.0L685.7 788.9C709.4 790.3 722.0 787.6 727.0 779.1M606.1 778.3C609.6 785.8 621.3 788.5 642.7 790.4L685.3 792.4C709.0 793.8 721.6 791.1 726.6 782.6M605.8 781.7C609.3 789.2 621.0 791.9 642.3 793.9L684.9 795.8C708.6 797.2 721.1 794.5 726.1 786.0M605.6 785.2C609.1 792.7 620.7 795.4 642.0 797.3L684.5 799.3C708.1 800.7 720.7 798.0 725.7 789.5M605.3 788.6C608.8 796.1 620.4 798.8 641.7 800.8L684.1 802.7C707.7 804.1 720.2 801.4 725.2 792.9M605.0 792.1C608.5 799.6 620.2 802.3 641.3 804.2L683.7 806.1C707.3 807.5 719.8 804.8 724.8 796.3M604.7 795.5C608.2 803.0 619.9 805.7 641.0 807.7L683.3 809.6C706.8 811.0 719.3 808.3 724.3 799.8M604.5 799.0C608.0 806.5 619.6 809.2 640.7 811.1L682.9 813.0C706.4 814.4 718.9 811.7 723.9 803.2M604.2 802.4C607.7 809.9 619.3 812.6 640.4 814.6L682.6 816.5C706.0 817.9 718.4 815.2 723.4 806.7M603.9 805.9C607.4 813.4 619.0 816.1 640.0 818.0L682.2 819.9C705.6 821.3 717.9 818.6 722.9 810.1M603.7 809.3C607.2 816.8 618.7 819.5 639.7 821.5L681.8 823.4C705.1 824.8 717.5 822.1 722.5 813.6M603.4 812.8C606.9 820.3 618.4 823.0 639.4 824.9L681.4 826.8C704.7 828.2 717.0 825.5 722.0 817.0M603.1 816.2C606.6 823.7 618.1 826.4 639.1 828.4L681.0 830.3C704.3 831.6 716.6 828.9 721.6 820.4M602.8 819.7C606.3 827.2 617.8 829.9 638.7 831.8L680.6 833.7C703.9 835.1 716.1 832.4 721.1 823.9M602.6 823.1C606.1 830.6 617.5 833.3 638.4 835.3L680.2 837.1C703.4 838.5 715.7 835.8 720.7 827.3M602.3 826.6C605.8 834.1 617.2 836.8 638.1 838.7L679.9 840.6C703.1 842.0 715.3 839.3 720.3 830.8M602.0 830.0C605.5 837.5 616.9 840.2 637.8 842.2L679.5 844.0C702.7 845.4 714.9 842.7 719.9 834.2M601.7 833.5C605.2 841.0 616.6 843.7 637.5 845.6L679.2 847.5C702.3 848.9 714.5 846.2 719.5 837.7M601.5 836.9C605.0 844.4 616.3 847.1 637.2 849.1L678.8 850.9C701.9 852.3 714.1 849.6 719.1 841.1M601.2 840.4C604.7 847.9 616.1 850.6 636.9 852.5L678.5 854.4C701.6 855.7 713.7 853.0 718.7 844.5M600.9 843.8C604.4 851.3 615.8 854.0 636.5 856.0L678.1 857.8C701.2 859.2 713.4 856.5 718.4 848.0M600.6 847.3C604.1 854.8 615.5 857.5 636.2 859.4L677.8 861.3C700.8 862.6 713.0 859.9 718.0 851.4M600.4 850.7C603.9 858.2 615.2 860.9 635.9 862.9L677.4 864.7C700.5 866.1 712.6 863.4 717.6 854.9M600.1 854.2C603.6 861.7 614.9 864.4 635.6 866.3L677.1 868.2C700.1 869.5 712.2 866.8 717.2 858.3M599.8 857.6C603.3 865.1 614.6 867.8 635.3 869.8L676.7 871.6C699.7 873.0 711.8 870.3 716.8 861.8M599.5 861.1C603.0 868.6 614.3 871.3 635.0 873.2L676.4 875.1C699.3 876.4 711.4 873.7 716.4 865.2M599.3 864.5C602.8 872.0 614.0 874.7 634.7 876.6L676.0 878.5C699.0 879.9 711.0 877.2 716.0 868.7M599.0 868.0C602.5 875.5 613.8 878.2 634.4 880.1L675.7 882.0C698.6 883.3 710.6 880.6 715.6 872.1M598.7 871.4C602.2 878.9 613.5 881.6 634.1 883.5L675.3 885.4C698.2 886.8 710.2 884.1 715.2 875.6M598.4 874.9C601.9 882.4 613.2 885.1 633.8 887.0L675.0 888.8C697.8 890.2 709.9 887.5 714.9 879.0M598.2 878.3C601.7 885.8 612.9 888.5 633.5 890.4L674.6 892.3C697.5 893.6 709.5 890.9 714.5 882.4M597.9 881.8C601.4 889.3 612.6 892.0 633.1 893.9L674.3 895.7C697.1 897.1 709.1 894.4 714.1 885.9M597.6 885.2C601.1 892.7 612.3 895.4 632.8 897.3L673.9 899.2C696.7 900.5 708.7 897.8 713.7 889.3M597.3 888.7C600.8 896.2 612.0 898.9 632.5 900.8L673.5 902.6C696.3 904.0 708.3 901.3 713.3 892.8M597.0 892.1C600.5 899.6 611.7 902.3 632.2 904.2L673.2 906.1C696.0 907.4 707.9 904.7 712.9 896.2M596.7 895.6C600.2 903.1 611.4 905.8 631.9 907.7L672.8 909.5C695.6 910.9 707.5 908.2 712.5 899.7M596.5 899.0C600.0 906.5 611.1 909.2 631.6 911.1L672.5 913.0C695.2 914.3 707.1 911.6 712.1 903.1M596.2 902.5C599.7 910.0 610.8 912.7 631.2 914.6L672.1 916.4C694.9 917.8 706.8 915.1 711.8 906.6M595.9 905.9C599.4 913.4 610.5 916.1 630.9 918.0L671.8 919.9C694.5 921.2 706.4 918.5 711.4 910.0M595.6 909.4C599.1 916.9 610.2 919.6 630.6 921.5L671.4 923.3C694.1 924.7 706.0 922.0 711.0 913.5M595.3 912.8C598.8 920.3 609.9 923.0 630.3 924.9L671.1 926.8C693.7 928.1 705.6 925.4 710.6 916.9M595.0 916.3C598.5 923.8 609.6 926.5 630.0 928.4L670.7 930.2C693.4 931.5 705.2 928.8 710.2 920.3M594.8 919.7C598.3 927.2 609.3 929.9 629.7 931.8L670.4 933.7C693.0 935.0 704.8 932.3 709.8 923.8M594.5 923.2C598.0 930.7 609.0 933.4 629.4 935.3L670.0 937.1C692.6 938.4 704.4 935.7 709.4 927.2M594.2 926.6C597.7 934.1 608.7 936.8 629.0 938.7L669.7 940.6C692.2 941.9 704.0 939.2 709.0 930.7M593.9 930.1C597.4 937.6 608.4 940.3 628.7 942.2L669.3 944.0C691.9 945.3 703.6 942.6 708.6 934.1M593.6 933.5C597.1 941.0 608.1 943.7 628.4 945.6L669.0 947.4C691.5 948.8 703.3 946.1 708.3 937.6M593.3 937.0C596.8 944.5 607.8 947.2 628.1 949.1L668.6 950.9C691.1 952.2 702.9 949.5 707.9 941.0M593.1 940.4C596.6 947.9 607.5 950.6 627.8 952.5L668.3 954.3C690.7 955.7 702.5 953.0 707.5 944.5M592.8 943.9C596.3 951.4 607.3 954.1 627.5 956.0L667.9 957.8C690.4 959.1 702.1 956.4 707.1 947.9M592.5 947.3C596.0 954.8 607.0 957.5 627.2 959.4L667.6 961.2C690.0 962.6 701.7 959.9 706.7 951.4M592.2 950.8C595.7 958.3 606.7 961.0 626.8 962.9L667.2 964.7C689.6 966.0 701.3 963.3 706.3 954.8M591.9 954.2C595.4 961.7 606.4 964.4 626.5 966.3L666.9 968.1C689.3 969.4 700.9 966.7 705.9 958.2M591.6 957.7C595.1 965.2 606.1 967.9 626.2 969.8L666.5 971.6C688.9 972.9 700.6 970.2 705.6 961.7M591.4 961.1C594.9 968.6 605.8 971.3 625.9 973.2L666.1 975.0C688.5 976.3 700.2 973.6 705.2 965.1M591.1 964.6C594.6 972.1 605.5 974.8 625.6 976.7L665.8 978.5C688.1 979.8 699.8 977.1 704.8 968.6M590.8 968.0C594.3 975.5 605.2 978.2 625.3 980.1L665.4 981.9C687.8 983.2 699.4 980.5 704.4 972.0M590.5 971.5C594.0 979.0 604.9 981.7 625.0 983.6L665.1 985.4C687.4 986.7 699.0 984.0 704.0 975.5M590.2 974.9C593.7 982.4 604.6 985.1 624.6 987.0L664.7 988.8C687.0 990.1 698.6 987.4 703.6 978.9M589.9 978.4C593.4 985.9 604.3 988.6 624.3 990.5L664.4 992.3C686.7 993.6 698.2 990.9 703.2 982.4M589.6 981.8C593.1 989.3 604.0 992.0 624.0 993.9L664.0 995.7C686.3 997.0 697.8 994.3 702.8 985.8M589.4 985.3C592.9 992.8 603.7 995.5 623.7 997.3L663.7 999.1C685.9 1000.4 697.5 997.7 702.5 989.2M589.1 988.7C592.6 996.2 603.4 998.9 623.4 1000.8L663.3 1002.6C685.5 1003.9 697.1 1001.2 702.1 992.7M589.0 992.2C592.5 999.7 603.3 1002.4 623.2 1004.2L663.0 1006.0C685.2 1007.3 696.7 1004.6 701.7 996.1M588.9 995.6C592.4 1003.1 603.2 1005.8 623.0 1007.7L662.8 1009.5C684.8 1010.8 696.3 1008.1 701.3 999.6M588.9 999.1C592.4 1006.6 603.1 1009.3 622.9 1011.1L662.5 1012.9C684.5 1014.2 695.9 1011.5 700.9 1003.0M588.8 1002.5C592.3 1010.0 603.0 1012.7 622.7 1014.6L662.2 1016.4C684.2 1017.6 695.5 1014.9 700.5 1006.4M588.8 1006.0C592.3 1013.5 602.9 1016.2 622.6 1018.0L662.0 1019.8C683.8 1021.1 695.1 1018.4 700.1 1009.9M588.7 1009.4C592.2 1016.9 602.8 1019.6 622.4 1021.5L661.7 1023.2C683.5 1024.5 694.7 1021.8 699.7 1013.3M588.7 1012.9C592.2 1020.4 602.7 1023.1 622.3 1024.9L661.4 1026.7C683.1 1027.9 694.4 1025.2 699.4 1016.7M588.7 1016.3C592.2 1023.8 602.7 1026.5 622.2 1028.4L661.1 1030.1C682.8 1031.4 694.0 1028.7 699.0 1020.2M588.6 1019.8C592.1 1027.3 602.6 1030.0 622.0 1031.8L660.9 1033.6C682.5 1034.8 693.6 1032.1 698.6 1023.6M588.6 1023.2C592.1 1030.7 602.5 1033.4 621.9 1035.3L660.6 1037.0C682.1 1038.2 693.2 1035.5 698.2 1027.0M588.5 1026.7C592.0 1034.2 602.4 1036.9 621.7 1038.7L660.3 1040.4C681.8 1041.7 692.8 1039.0 697.8 1030.5M588.5 1030.1C592.0 1037.6 602.3 1040.3 621.6 1042.1L660.0 1043.9C681.4 1045.1 692.4 1042.4 697.4 1033.9M588.4 1033.6C591.9 1041.1 602.2 1043.8 621.4 1045.6L659.8 1047.3C681.1 1048.5 692.0 1045.8 697.0 1037.3M588.4 1037.0C591.9 1044.5 602.1 1047.2 621.2 1049.0L659.5 1050.8C680.7 1052.0 691.6 1049.3 696.6 1040.8M588.3 1040.5C591.8 1048.0 602.0 1050.7 621.1 1052.5L659.2 1054.2C680.3 1055.4 691.2 1052.7 696.2 1044.2M588.3 1043.9C591.8 1051.4 602.0 1054.1 620.9 1055.9L658.9 1057.6C680.0 1058.8 690.7 1056.1 695.7 1047.6M588.3 1047.4C591.8 1054.9 601.9 1057.6 620.8 1059.4L658.6 1061.1C679.6 1062.3 690.3 1059.6 695.3 1051.1M588.2 1050.8C591.7 1058.3 601.8 1061.0 620.6 1062.8L658.3 1064.5C679.3 1065.7 689.9 1063.0 694.9 1054.5M588.2 1054.3C591.7 1061.8 601.7 1064.5 620.5 1066.3L658.0 1067.9C678.9 1069.1 689.5 1066.4 694.5 1057.9M588.1 1057.7C591.6 1065.2 601.6 1067.9 620.3 1069.7L657.8 1071.4C678.5 1072.6 689.1 1069.9 694.1 1061.4M588.1 1061.2C591.6 1068.7 601.5 1071.4 620.2 1073.1L657.5 1074.8C678.2 1076.0 688.7 1073.3 693.7 1064.8M588.0 1064.6C591.5 1072.1 601.4 1074.8 620.0 1076.6L657.2 1078.3C677.8 1079.4 688.3 1076.7 693.3 1068.2M588.0 1068.1C591.5 1075.6 601.4 1078.3 619.9 1080.0L657.0 1081.7C677.6 1082.9 688.0 1080.2 693.0 1071.7M588.0 1071.5C591.5 1079.0 601.4 1081.7 619.9 1083.5L657.0 1085.2C677.6 1086.3 688.0 1083.6 693.0 1075.1" fill="none" stroke="#e2480b" stroke-width="1.25" clip-path="url(#prclip)"/>
<polygon points="640.0,680.0 618.7,666.8 613.9,697.7 609.2,760.0 599.6,881.0 590.0,997.7 589.5,1056.0 594.5,1063.5 602.0,1068.0 610.0,1069.3 661.4,1070.3 672.0,1068.3 680.0,1064.5 687.0,1059.8 692.0,1053.7 697.0,1033.0 709.0,926.0 719.7,831.0 729.0,760.0 736.0,720.0 737.0,697.7 720.0,680.0" fill="url(#gr)" />
<polygon points="633.0,543.0 636.0,541.5 631.7,555.0 628.4,602.6 625.6,662.0 618.7,666.8 617.5,662.0 619.8,602.6 624.6,555.0" fill="#7a3010" />
<polygon points="618.7,666.8 613.9,697.7 609.2,760.0 599.6,881.0 590.0,997.7 592.5,997.7 603.6,881.0 613.8,760.0 619.0,700.0 624.0,668.0" fill="#7a3010" />
<polygon points="84.3,483.4 400.0,493.3 706.6,503.0 716.0,505.5 724.4,516.0 729.0,593.0 734.0,650.0 737.0,697.7 735.5,706.0 728.0,713.0 716.0,718.5 697.0,721.4 637.7,721.4 623.4,716.7 616.0,711.0 613.9,697.7 618.7,666.8 624.6,662.0 628.0,602.6 631.7,555.0 636.0,541.5 400.0,533.8 159.5,527.3 146.0,590.0 133.5,645.0 147.8,649.0 140.0,698.0 135.3,695.6 124.6,702.7 90.6,702.7 54.8,695.6 36.9,684.8 27.9,672.3 26.5,674.0 71.8,494.2" fill="#ff5512" />
<polyline points="28.5,680.5 37.5,692.5 55.0,703.0 90.6,710.0 124.6,710.0 136.0,703.5" fill="none" stroke="#d9420a" stroke-width="1.3" />
<polyline points="615.0,704.5 617.0,717.5 624.0,724.0 637.7,728.5 697.0,728.5 716.0,725.5 728.0,720.0 735.5,712.5" fill="none" stroke="#d9420a" stroke-width="1.3" />
<polyline points="28.5,685.0 37.5,697.0 55.0,707.5 90.6,714.5 124.6,714.5 136.0,708.0" fill="none" stroke="#d9420a" stroke-width="1.3" />
<polyline points="615.0,709.0 617.0,722.0 624.0,728.5 637.7,733.0 697.0,733.0 716.0,730.0 728.0,724.5 735.5,717.0" fill="none" stroke="#d9420a" stroke-width="1.3" />
<polygon points="91.5,495.1 300.0,500.3 520.0,507.3 700.6,514.0 706.0,602.0 711.3,702.4 705.0,708.0 697.0,710.7 640.0,709.6 638.9,674.0 649.6,669.0 648.4,602.0 647.2,530.0 520.0,526.2 300.0,519.7 139.5,515.0 116.0,649.0 126.4,652.6 117.4,691.0 60.1,689.3 51.2,683.9 48.5,675.9" fill="#1cc3a1" stroke="#6b3a12" stroke-width="1.3" stroke-opacity="0.75" stroke-linejoin="round"/>
<polyline points="38.0,676.0 80.0,497.5 87.5,489.8 400.0,499.6 704.0,509.3 712.5,516.5 718.0,602.0 724.5,700.0 718.0,712.0 697.0,716.2 638.0,715.8 631.0,712.0" fill="none" stroke="#c23a08" stroke-width="1.4" />
<polyline points="38.0,676.0 44.0,687.0 58.0,695.0 118.0,697.5 127.0,694.0" fill="none" stroke="#d9420a" stroke-width="1.2" />
<polyline points="125.5,647.0 151.0,522.0 300.0,523.7 520.0,530.3 639.5,536.5 637.0,665.0 631.0,672.0" fill="none" stroke="#c23a08" stroke-width="1.4" />
<polyline points="140.0,506.6 300.0,510.8 520.0,517.6 652.0,521.6" fill="none" stroke="#17a98b" stroke-width="2.2" />
<polyline points="140.0,509.2 300.0,513.4 520.0,520.2 652.0,524.2" fill="none" stroke="#0d6f5c" stroke-width="0.9" stroke-dasharray="26 5" stroke-opacity="0.8"/>
<polyline points="95.0,494.6 300.0,499.9 520.0,506.9 699.0,513.4" fill="none" stroke="#5a2a0a" stroke-width="0.9" stroke-dasharray="30 9" stroke-opacity="0.7"/>
<polyline points="146.0,515.6 300.0,520.0 520.0,526.5 645.0,530.3" fill="none" stroke="#3a3a1a" stroke-width="0.9" stroke-dasharray="30 9" stroke-opacity="0.6"/>
<polyline points="160.0,526.3 300.0,528.7 520.0,535.7 633.0,540.2" fill="none" stroke="#139078" stroke-width="1.0" />
<polyline points="160.0,525.6 300.0,528.0 520.0,535.0 633.0,539.6" fill="none" stroke="#2bbf9c" stroke-width="2.2" />
<polyline points="50.5,676.0 93.0,497.0" fill="none" stroke="#16a98b" stroke-width="2" />
<polyline points="114.8,648.0 138.0,517.0" fill="none" stroke="#16a98b" stroke-width="2" />
<polyline points="649.0,531.0 650.5,668.0" fill="none" stroke="#16a98b" stroke-width="2" />
<polyline points="702.0,516.0 712.5,701.0" fill="none" stroke="#16a98b" stroke-width="2" />
<polygon points="99.8,500.6 133.5,502.2 109.4,625.7 101.3,656.2 107.6,659.8 107.6,682.1 67.3,681.2 61.9,668.7" fill="#fbfb70" stroke="#2f6a45" stroke-width="1.2" stroke-opacity="0.8" stroke-linejoin="round"/>
<polygon points="659.0,519.4 691.0,520.6 693.5,602.0 697.0,690.0 697.0,702.0 660.0,700.0 652.0,690.0 652.0,681.0 664.0,682.0 660.0,602.0" fill="#fbfb70" stroke="#2f6a45" stroke-width="1.2" stroke-opacity="0.8" stroke-linejoin="round"/>
<path d="M99.9 508.4L132.8 494.6M106.8 513.0L127.2 504.4M106.8 513.0l-0.6 -3M100.8 522.6L123.9 512.9M123.9 512.9l0.8 -3.2M95.0 531.9L129.5 517.4M102.3 536.3L123.7 527.3M102.3 536.3l-0.6 -3M96.1 546.0L120.3 535.8M120.3 535.8l0.8 -3.2M90.1 555.4L126.3 540.2M97.9 559.6L120.2 550.2M97.9 559.6l-0.6 -3M91.4 569.4L116.8 558.8M116.8 558.8l0.8 -3.2M85.3 578.8L123.0 563.0M93.4 582.9L116.7 573.1M93.4 582.9l-0.6 -3M86.7 592.8L113.2 581.7M113.2 581.7l0.8 -3.2M80.4 602.3L119.8 585.8M89.0 606.2L113.3 596.0M89.0 606.2l-0.6 -3M82.1 616.2L109.6 604.6M109.6 604.6l0.8 -3.2M75.5 625.8L116.5 608.6M84.5 629.6L109.8 618.9M84.5 629.6l-0.6 -3M77.4 639.6L106.0 627.6M106.0 627.6l0.8 -3.2M70.6 649.3L113.2 631.4M80.0 652.9L106.3 641.8M80.0 652.9l-0.6 -3M72.7 663.0L102.5 650.5M102.5 650.5l0.8 -3.2M65.7 672.8L110.0 654.2M75.6 676.2L102.8 664.7M75.6 676.2l-0.6 -3M68.0 686.4L98.9 673.5M98.9 673.5l0.8 -3.2" stroke="#4e5718" stroke-width="1.55" fill="none" stroke-linecap="round" clip-path="url(#ycl)"/><circle cx="97.7" cy="505.0" r="2.6" fill="#1cc3a1"/><circle cx="92.8" cy="528.2" r="2.6" fill="#1cc3a1"/><circle cx="130.8" cy="523.0" r="2.6" fill="#1cc3a1"/><circle cx="87.9" cy="551.5" r="2.6" fill="#1cc3a1"/><circle cx="127.6" cy="546.1" r="2.6" fill="#1cc3a1"/><circle cx="83.0" cy="574.7" r="2.6" fill="#1cc3a1"/><circle cx="124.3" cy="569.1" r="2.6" fill="#1cc3a1"/><circle cx="78.1" cy="598.0" r="2.6" fill="#1cc3a1"/><circle cx="121.1" cy="592.2" r="2.6" fill="#1cc3a1"/><circle cx="73.2" cy="621.2" r="2.6" fill="#1cc3a1"/><circle cx="117.8" cy="615.3" r="2.6" fill="#1cc3a1"/><circle cx="68.3" cy="644.5" r="2.6" fill="#1cc3a1"/><circle cx="114.6" cy="638.3" r="2.6" fill="#1cc3a1"/><circle cx="63.3" cy="667.7" r="2.6" fill="#1cc3a1"/><circle cx="111.4" cy="661.4" r="2.6" fill="#1cc3a1"/>
<path d="M659.6 526.2L690.8 514.3M667.6 531.3L686.8 524.0M667.6 531.3l-0.6 -3M663.2 540.7L685.0 532.4M685.0 532.4l0.8 -3.2M659.1 549.7L691.5 537.4M667.4 554.7L687.4 547.1M667.4 554.7l-0.6 -3M662.9 564.1L685.5 555.6M685.5 555.6l0.8 -3.2M658.6 573.2L692.2 560.5M667.2 578.1L687.9 570.3M667.2 578.1l-0.6 -3M662.6 587.6L686.0 578.7M686.0 578.7l0.8 -3.2M658.2 596.8L693.0 583.6M667.1 601.6L688.5 593.4M667.1 601.6l-0.6 -3M662.2 611.1L686.5 601.9M686.5 601.9l0.8 -3.2M657.7 620.3L693.7 606.6M666.9 625.0L689.1 616.6M666.9 625.0l-0.6 -3M661.9 634.6L687.0 625.1M687.0 625.1l0.8 -3.2M657.2 643.9L694.5 629.7M666.8 648.4L689.7 639.7M666.8 648.4l-0.6 -3M661.6 658.1L687.5 648.2M687.5 648.2l0.8 -3.2M656.7 667.4L695.2 652.8M666.6 671.8L690.2 662.8M666.6 671.8l-0.6 -3M661.3 681.6L688.0 671.4M688.0 671.4l0.8 -3.2M656.3 690.9L695.9 675.9M666.4 695.3L690.8 686.0M666.4 695.3l-0.6 -3M660.9 705.0L688.5 694.6M688.5 694.6l0.8 -3.2" stroke="#4e5718" stroke-width="1.55" fill="none" stroke-linecap="round" clip-path="url(#ycr)"/><circle cx="658.2" cy="524.0" r="2.6" fill="#1cc3a1"/><circle cx="657.8" cy="547.4" r="2.6" fill="#1cc3a1"/><circle cx="692.4" cy="541.7" r="2.6" fill="#1cc3a1"/><circle cx="657.2" cy="570.8" r="2.6" fill="#1cc3a1"/><circle cx="693.1" cy="565.0" r="2.6" fill="#1cc3a1"/><circle cx="656.8" cy="594.1" r="2.6" fill="#1cc3a1"/><circle cx="693.9" cy="588.2" r="2.6" fill="#1cc3a1"/><circle cx="656.2" cy="617.5" r="2.6" fill="#1cc3a1"/><circle cx="694.6" cy="611.5" r="2.6" fill="#1cc3a1"/><circle cx="655.8" cy="640.9" r="2.6" fill="#1cc3a1"/><circle cx="695.4" cy="634.7" r="2.6" fill="#1cc3a1"/><circle cx="655.2" cy="664.3" r="2.6" fill="#1cc3a1"/><circle cx="696.1" cy="658.0" r="2.6" fill="#1cc3a1"/><circle cx="654.8" cy="687.6" r="2.6" fill="#1cc3a1"/><circle cx="696.9" cy="681.2" r="2.6" fill="#1cc3a1"/>
<polyline points="60.0,699.5 90.6,702.9 122.0,702.6 131.0,699.0" fill="none" stroke="#2a9a80" stroke-width="1.5" />
<polyline points="628.0,720.2 637.7,722.4 697.0,722.6 712.0,720.0" fill="none" stroke="#2a9a80" stroke-width="1.5" />
<path d="M357.7 686 C368 668 385 663.5 396 663.5 C410 663.5 428 672 435 686 C428 700 412 708.8 396 708.8 C382 708.8 366 702 357.7 686Z" fill="#f3f3f3"/><path d="M372 668L368 702M424 668L421 705M358 694L436 697" stroke="#e2e2e2" stroke-width="1" fill="none" clip-path="url(#holeclip)"/><path d="M357.7 686 C368 668 385 663.5 396 663.5 C410 663.5 428 672 435 686 C428 700 412 708.8 396 708.8 C382 708.8 366 702 357.7 686Z" fill="none" stroke="#1d9fe3" stroke-width="2.6"/>
<path d="M386.3 588L389.6 588L389.6 780.5L386.3 780.5Z" fill="#5a3cc0"/>
<path d="M386.7 548.4L396.9 588.5L376 588.5Z" fill="#5a3cc0"/>
<path d="M388 778.6L641 788.4L641 791L388 782.6Z" fill="#b81f10"/>
<path d="M641 777L684 791.6L641 803.5Z" fill="#b81f10"/>
<path d="M386 781L390.5 781L375 962L371.2 962Z" fill="#28ae26"/>
<path d="M362 961.5L382 961.5L369 1002Z" fill="#28ae26"/>
<polygon points="84.3,483.4 400.0,493.3 706.6,503.0 716.0,505.5 724.4,516.0 729.0,593.0 734.0,650.0 737.0,697.7 736.0,720.0 729.0,760.0 719.7,831.0 709.0,926.0 697.0,1033.0 692.0,1053.7 687.0,1059.8 680.0,1064.5 672.0,1068.3 661.4,1070.3 610.0,1069.3 602.0,1068.0 594.5,1063.5 590.0,1056.0 590.0,997.7 599.6,881.0 400.0,873.3 187.8,864.6 176.0,931.0 181.8,969.0 177.0,988.0 171.0,1039.0 169.2,1043.5 165.0,1047.0 157.0,1049.5 104.6,1047.6 91.0,1044.0 81.0,1039.0 74.5,1033.5 71.0,1027.5 69.0,1016.7 51.0,874.0 35.6,760.0 28.0,690.0 26.5,674.0 71.8,494.2" fill="none" stroke="#1d9fe3" stroke-width="7" stroke-linejoin="round" clip-path="url(#silclip)"/>
<polyline points="26.5,674.0 28.0,690.0 35.6,760.0 51.0,874.0 69.0,1016.7" fill="none" stroke="#1d9fe3" stroke-width="10.4" clip-path="url(#silclip)"/>
<polyline points="737.0,697.7 736.0,720.0 729.0,760.0 719.7,831.0 709.0,926.0 697.0,1033.0" fill="none" stroke="#1d9fe3" stroke-width="10.4" clip-path="url(#silclip)"/></svg>
<div style="position:absolute;left:0;top:0;width:1683px;height:52px;background:#fff"></div>
<svg style="position:absolute;left:1520px;top:0" width="163" height="30" viewBox="1520 0 163 30" fill="none" stroke="#8a8a8a" stroke-width="1">
<path d="M1529 13.5H1541"/>
<path d="M1587.5 10.5h9v9h-9z"/><path d="M1589.5 10.5v-2h9v9h-2"/>
<path d="M1646 8L1658 20M1658 8L1646 20"/></svg>
<div style="position:absolute;left:0;top:52px;width:1683px;height:90px;background:linear-gradient(90deg,#19175b 0%,#18165a 25%,#0b0a44 80%,#09083f 100%)"></div>
<div style="position:absolute;left:254px;top:64px;width:326px;height:35px;background:#fff;border-radius:3px"></div>
<span class="t" style="left:103.50px;top:73.23px;font-size:18.63px;color:#fff;transform:scaleX(0.9049);">ПОДГОТОВКА</span>
<span class="t" style="left:285.00px;top:73.23px;font-size:18.63px;color:#0c0b40;transform:scaleX(0.8701);">ПРЕДВАРИТЕЛЬНЫЙ ПРОСМОТР</span>
<span class="t" style="left:619.00px;top:73.23px;font-size:18.63px;color:#fff;transform:scaleX(0.9015);">МОНИТОР</span>
<div style="position:absolute;left:1524px;top:67px;width:70px;height:30px;border:1px solid #fff;border-radius:3px"></div>
<div style="position:absolute;left:1609px;top:67px;width:54px;height:30px;border:1px solid #fff;border-radius:3px"></div>
<span class="t" style="left:1532.70px;top:76.16px;font-size:13.77px;color:#fff;transform:scaleX(0.9925);">Магазин</span>
<span class="t" style="left:1617.50px;top:76.16px;font-size:13.77px;color:#fff;transform:scaleX(0.9735);">Войти</span>
<div style="position:absolute;left:0;top:112px;width:1053px;height:60px;background:#fff;border-right:1px solid #d8d8d8;border-bottom:1px solid #dcdcdc;box-sizing:content-box"></div>
<div style="position:absolute;left:1054px;top:112px;width:570px;height:60px;background:#efefef;border-top-right-radius:4px;border-bottom-right-radius:3px;border-bottom:1px solid #d8d8d8;box-shadow:0 1px 2px rgba(0,0,0,.12)"></div>
<svg style="position:absolute;left:1022.5px;top:134.5px" width="15" height="15" viewBox="0 0 15 15"><g transform="rotate(45 7.5 7.5)" fill="#5a5a5a"><rect x="5.3" y="0.2" width="4.4" height="2.2" rx="0.8"/><rect x="5.3" y="3.2" width="4.4" height="7.6"/><path d="M5.3 11.4h4.4L7.5 15z"/></g></svg>
<svg style="position:absolute;left:1593.8px;top:134.2px" width="15" height="15" viewBox="0 0 15 15"><g transform="rotate(45 7.5 7.5)" fill="#5a5a5a"><rect x="5.3" y="0.2" width="4.4" height="2.2" rx="0.8"/><rect x="5.3" y="3.2" width="4.4" height="7.6"/><path d="M5.3 11.4h4.4L7.5 15z"/></g></svg>
<svg style="position:absolute;left:1071px;top:132px" width="21" height="21" viewBox="0 0 21 21" fill="#0a0845"><rect x="0" y="0" width="20" height="6.5"/><rect x="0" y="9" width="14.5" height="3.6"/><rect x="0" y="15.6" width="7" height="2.4"/></svg>
<span class="t" style="left:1101.00px;top:134.36px;font-size:17.39px;color:#14142e;transform:scaleX(0.9434);">PETG_BF_D0.4_0.... - Fine - 0.3mm</span>
<svg style="position:absolute;left:1393px;top:132px" width="21" height="21" viewBox="0 0 21 21" fill="none" stroke="#4a4884" stroke-width="0.9"><rect x="0.5" y="0.5" width="19" height="19"/><path d="M0.5 0.5L19.5 19.5M19.5 0.5L0.5 19.5M10 0.5L19.5 10L10 19.5L0.5 10Z"/></svg>
<span class="t" style="left:1423.00px;top:134.36px;font-size:17.39px;color:#14142e;transform:scaleX(0.9633);">30%</span>
<svg style="position:absolute;left:1469px;top:131.8px" width="21" height="21" viewBox="0 0 21 21"><path d="M4.6 0.6H17C16 4.4 15.2 8.6 19.2 16.6H5.6C8.6 10 7.6 4.6 4.6 0.6Z" fill="#f4f4f4" stroke="#3a3870" stroke-width="1"/><path d="M0.4 7.8h4.8v5.2h6.4v6.6H0.4z" fill="#0a0845"/></svg>
<span class="t" style="left:1499.80px;top:134.36px;font-size:17.39px;color:#14142e;transform:scaleX(0.8285);">В...</span>
<svg style="position:absolute;left:1535px;top:132px" width="17" height="21" viewBox="0 0 17 21"><path d="M0.4 7.4Q8 10.4 15.6 7.4" fill="none" stroke="#3a3870" stroke-width="1.1"/><path d="M0.4 11.3H15.6" fill="none" stroke="#3a3870" stroke-width="1.1"/><path d="M8 0v3.2M8 20v-3.2" stroke="#0a0845" stroke-width="1.1"/><path d="M5.8 2.6h4.4L8 6zM5.8 17.4h4.4L8 14z" fill="#0a0845"/></svg>
<span class="t" style="left:1564.00px;top:134.36px;font-size:17.39px;color:#14142e;transform:scaleX(0.7803);">...</span>
<div style="position:absolute;left:1654px;top:436px;width:8px;height:488px;background:#0a0845"></div>
<div style="position:absolute;left:1647px;top:425px;width:22px;height:22px;border-radius:11px;background:#0a0845"></div>
<div style="position:absolute;left:1647px;top:913.4px;width:22px;height:22px;border-radius:11px;background:#0a0845"></div>
<svg style="position:absolute;left:1570px;top:410px" width="75" height="52" viewBox="1570 410 75 52"><path d="M1575 417.7H1624.5V424.8L1636.7 436.6L1624.5 448.6V454.3H1575Z" fill="#fff" stroke="#bdbdbd" stroke-width="1"/></svg>
<span class="t" style="left:1598.40px;top:429.10px;font-size:14.9px;color:#222;transform:scaleX(0.8332);">67</span>
<div style="position:absolute;left:159.5px;top:1360px;width:490px;height:8px;background:#0a0845;border-radius:4px"></div>
<div style="position:absolute;left:637.3px;top:1353px;width:21.6px;height:21.6px;border-radius:11px;background:#0a0845"></div>
<svg style="position:absolute;left:125px;top:1353px" width="19" height="22" viewBox="0 0 19 22"><path d="M0.3 0.6L17.7 11L0.3 21.4z" fill="#0a0845"/></svg>
<div style="position:absolute;left:1268.3px;top:1219px;width:389.6px;height:150px;background:#fff;border:1px solid #cfcfcf;border-radius:4px"></div>
<svg style="position:absolute;left:1293px;top:1239px" width="26" height="26" viewBox="0 0 26 26" fill="none" stroke="#0a0845" stroke-width="1.6"><circle cx="13" cy="13" r="11.3"/><path d="M12.6 5.6V13.4L16.6 17.4"/></svg>
<span class="t" style="left:1326.60px;top:1245.05px;font-size:17.59px;color:#14142e;transform:scaleX(1.0056);font-weight:bold;">23 минут</span>
<svg style="position:absolute;left:1608px;top:1239.8px" width="24.4" height="24.4" viewBox="0 0 24 24"><circle cx="12" cy="12" r="12" fill="#0a0845"/><circle cx="12.6" cy="6.4" r="1.8" fill="#fff"/><path d="M9.4 10.2h4.2l-1.4 7.2h1.8v1.4H9.2v-1.4h1.2l1-5.8H9.2z" fill="#fff"/></svg>
<svg style="position:absolute;left:1296px;top:1276px" width="21" height="22" viewBox="0 0 21 22" fill="#0a0845"><rect x="0" y="0" width="2.2" height="18"/><rect x="4.4" y="0" width="1.1" height="18"/><rect x="7.4" y="0" width="1.1" height="18"/><rect x="10.4" y="0" width="1.1" height="21.5"/><rect x="13.4" y="0" width="1.1" height="18"/><rect x="16" y="0" width="1.1" height="18"/><rect x="18" y="0" width="2" height="18"/></svg>
<span class="t" style="left:1326.00px;top:1280.61px;font-size:14.49px;color:#2a2a3a;transform:scaleX(0.8595);">4g · 1.23m · руб. 4.76</span>
<div style="position:absolute;left:1294px;top:1310px;width:338px;height:40px;background:#1d6fe6;border-radius:2px;border-bottom:1.5px solid #1659c0"></div>
<span class="t" style="left:1387.40px;top:1322.15px;font-size:17.39px;color:#fff;transform:scaleX(1.0052);">Сохранить в файл</span>
<div style="position:absolute;left:0;top:1390px;width:1683px;height:7px;background:#1a1e29"></div>
<div style="position:absolute;left:1028px;top:182px;width:570px;height:1033px;background:#fff;border:1px solid #c6c6c6;border-radius:3px;box-shadow:0 1px 2px rgba(0,0,0,.08)"></div>
<div style="position:absolute;left:1029px;top:183px;width:568px;height:43px;background:#efefef;border-bottom:1px solid #c8c8c8;border-top-left-radius:3px;border-top-right-radius:3px"></div>
<span class="t" style="left:1044.00px;top:196.56px;font-size:17.39px;color:#6a6a6a;transform:scaleX(1.0399);">Параметры печати</span>
<svg style="position:absolute;left:1566px;top:195px" width="19" height="19" viewBox="0 0 19 19"><path d="M3.6 3.6L15.4 15.4M15.4 3.6L3.6 15.4" stroke="#555" stroke-width="3"/></svg>
<span class="t" style="left:1044.60px;top:252.36px;font-size:17.39px;color:#14142e;transform:scaleX(0.9853);">Профиль</span>
<div style="position:absolute;left:1162px;top:243.4px;width:419.5px;height:33px;border:1px solid #c4c4c4;border-radius:4px;background:#fff"></div>
<span class="t" style="left:1177.70px;top:254.74px;font-size:12.63px;color:#222;transform:scaleX(0.9212);">PETG_BF_D0.4_0.3_0.5</span>
<span class="t" style="left:1311.00px;top:254.74px;font-size:12.63px;color:#c8c8c8;transform:scaleX(0.9979);">- Fine - 0.3mm</span>
<svg style="position:absolute;left:1550.8px;top:254.5px" width="17.5" height="11" viewBox="-2 -2 17.5 11"><path d="M0 0L6.75 7L13.5 0" fill="none" stroke="#555" stroke-width="2.2" stroke-linecap="square"/></svg>
<div style="position:absolute;left:1059px;top:291.2px;width:452.5px;height:38px;border:1px solid #c4c4c4;border-radius:2px;background:#fff"></div>
<svg style="position:absolute;left:1066px;top:304px" width="16" height="16" viewBox="0 0 16 16" fill="none" stroke="#999" stroke-width="1.6"><circle cx="6.4" cy="6.4" r="5"/><path d="M10 10L14.6 14.8"/></svg>
<span class="t" style="left:1083.60px;top:306.54px;font-size:12.63px;color:#9a9a9a;transform:scaleX(1.0204);font-style:italic;">Параметры поиска</span>
<svg style="position:absolute;left:1528px;top:303px" width="15" height="14" viewBox="0 0 15 14" fill="#555"><rect y="0" width="15" height="2.6"/><rect y="5.3" width="15" height="2.6"/><rect y="10.6" width="15" height="2.6"/></svg>
<div style="position:absolute;left:1562px;top:344px;width:10.5px;height:424px;background:#0a0845;border-radius:5.5px"></div>
<div style="position:absolute;left:1029px;top:340px;width:568px;height:798px;overflow:hidden">
<div style="position:absolute;left:30px;top:4px;width:493px;height:30px;background:#eee"></div>
<svg style="position:absolute;left:43px;top:9.5px" width="20" height="20" viewBox="0 0 20 20" fill="#222"><rect x="0" y="0" width="19.5" height="6.4"/><rect x="0" y="9.8" width="14.5" height="2.8"/><rect x="0" y="16.2" width="7" height="1.9"/></svg>
<span class="t" style="left:84.60px;top:10.55px;font-size:17.39px;color:#222;transform:scaleX(1.0075);font-weight:bold;">Качество</span>
<span class="t" style="left:41.70px;top:45.04px;font-size:12.63px;color:#262626;transform:scaleX(0.9763);font-style:italic;">Высота слоя</span>
<svg style="position:absolute;left:328.5px;top:40.7px" width="18" height="18" viewBox="-9 -9 18 18" fill="none" stroke="#636363" stroke-width="1.9"><g transform="rotate(-45)"><rect x="-7.9" y="-3" width="7" height="6" rx="2.2"/><rect x="0.9" y="-3" width="7" height="6" rx="2.2"/><path d="M-3 0H3"/></g></svg>
<div style="position:absolute;left:358.20000000000005px;top:35.30000000000001px;width:164.6px;height:29.5px;border:1px solid #c2c2c2;border-radius:2px;background:#fff"></div>
<span class="t" style="left:366.60px;top:45.14px;font-size:12.83px;color:#262626;">0.3</span>
<span class="t" style="left:491.60px;top:45.14px;font-size:12.83px;color:#9c9c9c;transform:scaleX(1.0762);">mm</span>
<span class="t" style="left:41.70px;top:76.04px;font-size:12.63px;color:#262626;transform:scaleX(0.9915);font-style:italic;">Высота первого слоя</span>
<svg style="position:absolute;left:328.5px;top:71.7px" width="18" height="18" viewBox="-9 -9 18 18" fill="none" stroke="#636363" stroke-width="1.9"><g transform="rotate(-45)"><rect x="-7.9" y="-3" width="7" height="6" rx="2.2"/><rect x="0.9" y="-3" width="7" height="6" rx="2.2"/><path d="M-3 0H3"/></g></svg>
<div style="position:absolute;left:358.20000000000005px;top:66.30000000000001px;width:164.6px;height:29.5px;border:1px solid #c2c2c2;border-radius:2px;background:#fff"></div>
<span class="t" style="left:366.60px;top:76.14px;font-size:12.83px;color:#262626;">0.2</span>
<span class="t" style="left:491.60px;top:76.14px;font-size:12.83px;color:#9c9c9c;transform:scaleX(1.0762);">mm</span>
<span class="t" style="left:41.70px;top:107.04px;font-size:12.63px;color:#262626;transform:scaleX(1.0704);font-style:italic;">Ширина линии</span>
<svg style="position:absolute;left:329.5px;top:103.8px" width="16" height="16" viewBox="0 0 16 16"><circle cx="8" cy="8" r="7.5" fill="#666"/><path d="M9.6 3.3c-1.9-0.7-2.7 .3-3 1.9L5.2 12.8M4.7 6.6h3.7M8.2 9.0l3.6 4M11.8 9.0l-3.6 4" fill="none" stroke="#fff" stroke-width="1.0"/></svg>
<div style="position:absolute;left:358.20000000000005px;top:97.30000000000001px;width:164.6px;height:29.5px;border:1px solid #c2c2c2;border-radius:2px;background:#fff"></div>
<span class="t" style="left:366.60px;top:107.14px;font-size:12.83px;color:#262626;">0.5</span>
<span class="t" style="left:491.60px;top:107.14px;font-size:12.83px;color:#9c9c9c;transform:scaleX(1.0762);">mm</span>
<span class="t" style="left:62.40px;top:138.04px;font-size:12.63px;color:#262626;transform:scaleX(1.0906);">Ширина линии стенки</span>
<div style="position:absolute;left:358.20000000000005px;top:128.3px;width:164.6px;height:29.5px;border:1px solid #c2c2c2;border-radius:2px;background:#fff"></div>
<span class="t" style="left:366.60px;top:138.14px;font-size:12.83px;color:#262626;">0.5</span>
<span class="t" style="left:491.60px;top:138.14px;font-size:12.83px;color:#9c9c9c;transform:scaleX(1.0762);">mm</span>
<span class="t" style="left:83.20px;top:169.04px;font-size:12.63px;color:#262626;transform:scaleX(1.0890);">Ширина линии внешней стенки</span>
<div style="position:absolute;left:358.20000000000005px;top:159.3px;width:164.6px;height:29.5px;border:1px solid #c2c2c2;border-radius:2px;background:#fff"></div>
<span class="t" style="left:366.60px;top:169.14px;font-size:12.83px;color:#262626;">0.5</span>
<span class="t" style="left:491.60px;top:169.14px;font-size:12.83px;color:#9c9c9c;transform:scaleX(1.0762);">mm</span>
<span class="t" style="left:83.20px;top:200.04px;font-size:12.63px;color:#262626;transform:scaleX(1.0866);">Ширина линии внутренней стенки</span>
<div style="position:absolute;left:358.20000000000005px;top:190.29999999999995px;width:164.6px;height:29.5px;border:1px solid #c2c2c2;border-radius:2px;background:#fff"></div>
<span class="t" style="left:366.60px;top:200.14px;font-size:12.83px;color:#262626;">0.5</span>
<span class="t" style="left:491.60px;top:200.14px;font-size:12.83px;color:#9c9c9c;transform:scaleX(1.0762);">mm</span>
<span class="t" style="left:62.40px;top:231.04px;font-size:12.63px;color:#262626;transform:scaleX(1.1187);">Ширина линии дна/крышки</span>
<div style="position:absolute;left:358.20000000000005px;top:221.29999999999995px;width:164.6px;height:29.5px;border:1px solid #c2c2c2;border-radius:2px;background:#fff"></div>
<span class="t" style="left:366.60px;top:231.14px;font-size:12.83px;color:#262626;">0.5</span>
<span class="t" style="left:491.60px;top:231.14px;font-size:12.83px;color:#9c9c9c;transform:scaleX(1.0762);">mm</span>
<span class="t" style="left:62.40px;top:262.04px;font-size:12.63px;color:#262626;transform:scaleX(1.0644);font-style:italic;">Ширина линии заполнения</span>
<svg style="position:absolute;left:329.5px;top:258.8px" width="16" height="16" viewBox="0 0 16 16"><circle cx="8" cy="8" r="7.5" fill="#666"/><path d="M9.6 3.3c-1.9-0.7-2.7 .3-3 1.9L5.2 12.8M4.7 6.6h3.7M8.2 9.0l3.6 4M11.8 9.0l-3.6 4" fill="none" stroke="#fff" stroke-width="1.0"/></svg>
<div style="position:absolute;left:358.20000000000005px;top:252.29999999999995px;width:164.6px;height:29.5px;border:1px solid #c2c2c2;border-radius:2px;background:#fff"></div>
<span class="t" style="left:366.60px;top:262.14px;font-size:12.83px;color:#262626;">0.4</span>
<span class="t" style="left:491.60px;top:262.14px;font-size:12.83px;color:#9c9c9c;transform:scaleX(1.0762);">mm</span>
<span class="t" style="left:62.40px;top:293.04px;font-size:12.63px;color:#262626;transform:scaleX(1.0673);font-style:italic;">Ширина линии юбки/каймы</span>
<svg style="position:absolute;left:329.5px;top:289.8px" width="16" height="16" viewBox="0 0 16 16"><circle cx="8" cy="8" r="7.5" fill="#666"/><path d="M9.6 3.3c-1.9-0.7-2.7 .3-3 1.9L5.2 12.8M4.7 6.6h3.7M8.2 9.0l3.6 4M11.8 9.0l-3.6 4" fill="none" stroke="#fff" stroke-width="1.0"/></svg>
<div style="position:absolute;left:358.20000000000005px;top:283.29999999999995px;width:164.6px;height:29.5px;border:1px solid #c2c2c2;border-radius:2px;background:#fff"></div>
<span class="t" style="left:366.60px;top:293.14px;font-size:12.83px;color:#262626;">0.4</span>
<span class="t" style="left:491.60px;top:293.14px;font-size:12.83px;color:#9c9c9c;transform:scaleX(1.0762);">mm</span>
<span class="t" style="left:41.70px;top:324.04px;font-size:12.63px;color:#262626;transform:scaleX(1.0434);font-style:italic;">Ширина линии первого слоя</span>
<div style="position:absolute;left:358.20000000000005px;top:314.29999999999995px;width:164.6px;height:29.5px;border:1px solid #c2c2c2;border-radius:2px;background:#fff"></div>
<span class="t" style="left:366.60px;top:324.14px;font-size:12.83px;color:#262626;">90</span>
<span class="t" style="left:505.10px;top:324.14px;font-size:12.83px;color:#9c9c9c;transform:scaleX(0.8329);">%</span>
<div style="position:absolute;left:30px;top:345px;width:493px;height:30px;background:#eee"></div>
<svg style="position:absolute;left:43px;top:350px" width="20" height="21" viewBox="0 0 20 21" fill="none" stroke="#444" stroke-width="1.3"><path d="M5.2 1h9.6c-1.4 5.6-0.4 11.6 3.4 18.6H1.8C5.6 12.6 6.6 6.6 5.2 1z"/><path d="M7.6 1c1 6-0.4 12.6-3 18.6M12.4 1c-1 6 0.4 12.6 3 18.6"/></svg>
<span class="t" style="left:84.40px;top:351.56px;font-size:17.39px;color:#222;transform:scaleX(1.0355);font-weight:bold;">Ограждение</span>
<svg style="position:absolute;left:491.5px;top:354.5px" width="17.5" height="11" viewBox="-2 -2 17.5 11"><path d="M0 0L6.75 7L13.5 0" fill="none" stroke="#555" stroke-width="2.2" stroke-linecap="square"/></svg>
<span class="t" style="left:62.40px;top:386.04px;font-size:12.63px;color:#262626;transform:scaleX(1.0258);font-style:italic;">Количество линий стенки</span>
<svg style="position:absolute;left:329.5px;top:382.8px" width="16" height="16" viewBox="0 0 16 16"><circle cx="8" cy="8" r="7.5" fill="#666"/><path d="M9.6 3.3c-1.9-0.7-2.7 .3-3 1.9L5.2 12.8M4.7 6.6h3.7M8.2 9.0l3.6 4M11.8 9.0l-3.6 4" fill="none" stroke="#fff" stroke-width="1.0"/></svg>
<div style="position:absolute;left:358.20000000000005px;top:376.29999999999995px;width:164.6px;height:29.5px;border:1px solid #c2c2c2;border-radius:2px;background:#fff"></div>
<span class="t" style="left:366.60px;top:386.14px;font-size:12.83px;color:#262626;">2</span>
<span class="t" style="left:41.70px;top:417.04px;font-size:12.63px;color:#262626;transform:scaleX(1.0693);">Расстояние очистки внешней стенки</span>
<div style="position:absolute;left:358.20000000000005px;top:407.29999999999995px;width:164.6px;height:29.5px;border:1px solid #c2c2c2;border-radius:2px;background:#fff"></div>
<span class="t" style="left:366.60px;top:417.14px;font-size:12.83px;color:#262626;">0.2</span>
<span class="t" style="left:491.60px;top:417.14px;font-size:12.83px;color:#9c9c9c;transform:scaleX(1.0762);">mm</span>
<span class="t" style="left:83.20px;top:448.04px;font-size:12.63px;color:#262626;transform:scaleX(1.0060);font-style:italic;">Слои крышки</span>
<svg style="position:absolute;left:329.5px;top:444.8px" width="16" height="16" viewBox="0 0 16 16"><circle cx="8" cy="8" r="7.5" fill="#666"/><path d="M9.6 3.3c-1.9-0.7-2.7 .3-3 1.9L5.2 12.8M4.7 6.6h3.7M8.2 9.0l3.6 4M11.8 9.0l-3.6 4" fill="none" stroke="#fff" stroke-width="1.0"/></svg>
<div style="position:absolute;left:358.20000000000005px;top:438.29999999999995px;width:164.6px;height:29.5px;border:1px solid #c2c2c2;border-radius:2px;background:#fff"></div>
<span class="t" style="left:366.60px;top:448.14px;font-size:12.83px;color:#262626;">3</span>
<span class="t" style="left:83.20px;top:479.04px;font-size:12.63px;color:#262626;transform:scaleX(1.0012);font-style:italic;">Слои дна</span>
<svg style="position:absolute;left:329.5px;top:475.8px" width="16" height="16" viewBox="0 0 16 16"><circle cx="8" cy="8" r="7.5" fill="#666"/><path d="M9.6 3.3c-1.9-0.7-2.7 .3-3 1.9L5.2 12.8M4.7 6.6h3.7M8.2 9.0l3.6 4M11.8 9.0l-3.6 4" fill="none" stroke="#fff" stroke-width="1.0"/></svg>
<div style="position:absolute;left:358.20000000000005px;top:469.29999999999995px;width:164.6px;height:29.5px;border:1px solid #c2c2c2;border-radius:2px;background:#fff"></div>
<span class="t" style="left:366.60px;top:479.14px;font-size:12.83px;color:#262626;">2</span>
<span class="t" style="left:41.70px;top:510.04px;font-size:12.63px;color:#262626;transform:scaleX(1.0339);font-style:italic;">Шаблон для крышки/дна</span>
<div style="position:absolute;left:358.20000000000005px;top:500.29999999999995px;width:164.6px;height:29.5px;border:1px solid #c2c2c2;border-radius:2px;background:#fff"></div>
<span class="t" style="left:366.30px;top:510.14px;font-size:12.83px;color:#262626;letter-spacing:0.5px;">Зигзаг</span>
<svg style="position:absolute;left:492.0px;top:510.2px" width="16.5" height="10.5" viewBox="-2 -2 16.5 10.5"><path d="M0 0L6.25 6.5L12.5 0" fill="none" stroke="#555" stroke-width="2.2" stroke-linecap="square"/></svg>
<span class="t" style="left:41.70px;top:541.03px;font-size:12.63px;color:#262626;transform:scaleX(1.1025);">Направление линии дна/крышки</span>
<div style="position:absolute;left:358.20000000000005px;top:531.3px;width:164.6px;height:29.5px;border:1px solid #c2c2c2;border-radius:2px;background:#fff"></div>
<span class="t" style="left:366.60px;top:541.14px;font-size:12.83px;color:#262626;">[ ]</span>
<span class="t" style="left:41.70px;top:572.03px;font-size:12.63px;color:#262626;transform:scaleX(1.0517);">Вставка внешней стенки</span>
<div style="position:absolute;left:358.20000000000005px;top:562.3px;width:164.6px;height:29.5px;border:1px solid #c2c2c2;border-radius:2px;background:#fff"></div>
<span class="t" style="left:366.60px;top:572.14px;font-size:12.83px;color:#262626;">0</span>
<span class="t" style="left:491.60px;top:572.14px;font-size:12.83px;color:#9c9c9c;transform:scaleX(1.0762);">mm</span>
<span class="t" style="left:41.70px;top:603.03px;font-size:12.63px;color:#262626;transform:scaleX(1.0390);font-style:italic;">Оптимизация порядка печати стенок</span>
<div style="position:absolute;left:358.20000000000005px;top:593.3px;width:29.5px;height:29.5px;border:1px solid #c2c2c2;border-radius:2px;background:#fff"></div>
<svg style="position:absolute;left:366px;top:602.0px" width="14" height="12" viewBox="0 0 14 12"><path d="M1.6 6.2L5.2 9.6L12.2 2" fill="none" stroke="#222" stroke-width="2.2"/></svg>
<span class="t" style="left:41.70px;top:634.03px;font-size:12.63px;color:#262626;transform:scaleX(1.0156);font-style:italic;">Печать внешних стенок</span>
<div style="position:absolute;left:358.20000000000005px;top:624.3px;width:29.5px;height:29.5px;border:1px solid #c2c2c2;border-radius:2px;background:#fff"></div>
<span class="t" style="left:41.70px;top:665.03px;font-size:12.63px;color:#262626;transform:scaleX(0.9959);font-style:italic;">Чередующаяся стенка</span>
<div style="position:absolute;left:358.20000000000005px;top:655.3px;width:29.5px;height:29.5px;border:1px solid #c2c2c2;border-radius:2px;background:#fff"></div>
<svg style="position:absolute;left:366px;top:664.0px" width="14" height="12" viewBox="0 0 14 12"><path d="M1.6 6.2L5.2 9.6L12.2 2" fill="none" stroke="#222" stroke-width="2.2"/></svg>
<span class="t" style="left:41.70px;top:696.03px;font-size:12.63px;color:#262626;transform:scaleX(1.0704);">Компенсация перекрытия стен</span>
<div style="position:absolute;left:358.20000000000005px;top:686.3px;width:29.5px;height:29.5px;border:1px solid #c2c2c2;border-radius:2px;background:#fff"></div>
<svg style="position:absolute;left:366px;top:695.0px" width="14" height="12" viewBox="0 0 14 12"><path d="M1.6 6.2L5.2 9.6L12.2 2" fill="none" stroke="#222" stroke-width="2.2"/></svg>
<span class="t" style="left:62.40px;top:727.03px;font-size:12.63px;color:#262626;transform:scaleX(1.0784);">Компенсация перекрытия внешних стен</span>
<div style="position:absolute;left:358.20000000000005px;top:717.3px;width:29.5px;height:29.5px;border:1px solid #c2c2c2;border-radius:2px;background:#fff"></div>
<svg style="position:absolute;left:366px;top:726.0px" width="14" height="12" viewBox="0 0 14 12"><path d="M1.6 6.2L5.2 9.6L12.2 2" fill="none" stroke="#222" stroke-width="2.2"/></svg>
<span class="t" style="left:62.40px;top:758.03px;font-size:12.63px;color:#262626;transform:scaleX(1.0760);">Компенсация перекрытия внутренних стен</span>
<div style="position:absolute;left:358.20000000000005px;top:748.3px;width:29.5px;height:29.5px;border:1px solid #c2c2c2;border-radius:2px;background:#fff"></div>
<svg style="position:absolute;left:366px;top:757.0px" width="14" height="12" viewBox="0 0 14 12"><path d="M1.6 6.2L5.2 9.6L12.2 2" fill="none" stroke="#222" stroke-width="2.2"/></svg>
<span class="t" style="left:41.70px;top:789.03px;font-size:12.63px;color:#262626;transform:scaleX(1.0174);font-style:italic;">Заполнение зазоров между стенками</span>
<div style="position:absolute;left:358.20000000000005px;top:779.3px;width:164.6px;height:29.5px;border:1px solid #c2c2c2;border-radius:2px;background:#fff"></div>
<span class="t" style="left:366.30px;top:789.13px;font-size:12.83px;color:#262626;letter-spacing:0.5px;">Везде</span>
<svg style="position:absolute;left:492.0px;top:789.2px" width="16.5" height="10.5" viewBox="-2 -2 16.5 10.5"><path d="M0 0L6.25 6.5L12.5 0" fill="none" stroke="#555" stroke-width="2.2" stroke-linecap="square"/></svg>
</div>
<svg style="position:absolute;left:1520.5px;top:353.2px" width="17.5" height="11" viewBox="-2 -2 17.5 11"><path d="M0 0L6.75 7L13.5 0" fill="none" stroke="#555" stroke-width="2.2" stroke-linecap="square"/></svg>
<div style="position:absolute;left:1029px;top:1138px;width:568px;height:1px;background:#c8c8c8"></div>
<div style="position:absolute;left:1044px;top:1154px;width:177px;height:39.6px;background:#ececec;border-bottom:2px solid #d0d0d0;border-radius:2px"></div>
<svg style="position:absolute;left:1060px;top:1164px" width="12" height="18" viewBox="0 0 12 18"><path d="M9.6 2.4L3.2 9L9.6 15.6" fill="none" stroke="#1a6be0" stroke-width="2.2"/></svg>
<span class="t" style="left:1083.00px;top:1166.15px;font-size:17.39px;color:#2268d8;transform:scaleX(1.0422);">Рекомендован</span>
<div style="position:absolute;left:1029px;top:1206px;width:568px;height:8px;background:#f0f0f0;border-top:1px solid #c8c8c8;border-bottom-left-radius:3px;border-bottom-right-radius:3px"></div>
<svg style="position:absolute;left:1300px;top:1207px" width="26" height="8" viewBox="0 0 26 8" fill="#555"><circle cx="4" cy="4" r="1.8"/><circle cx="12.6" cy="4" r="1.8"/><circle cx="21.2" cy="4" r="1.8"/></svg>
</body></html>
